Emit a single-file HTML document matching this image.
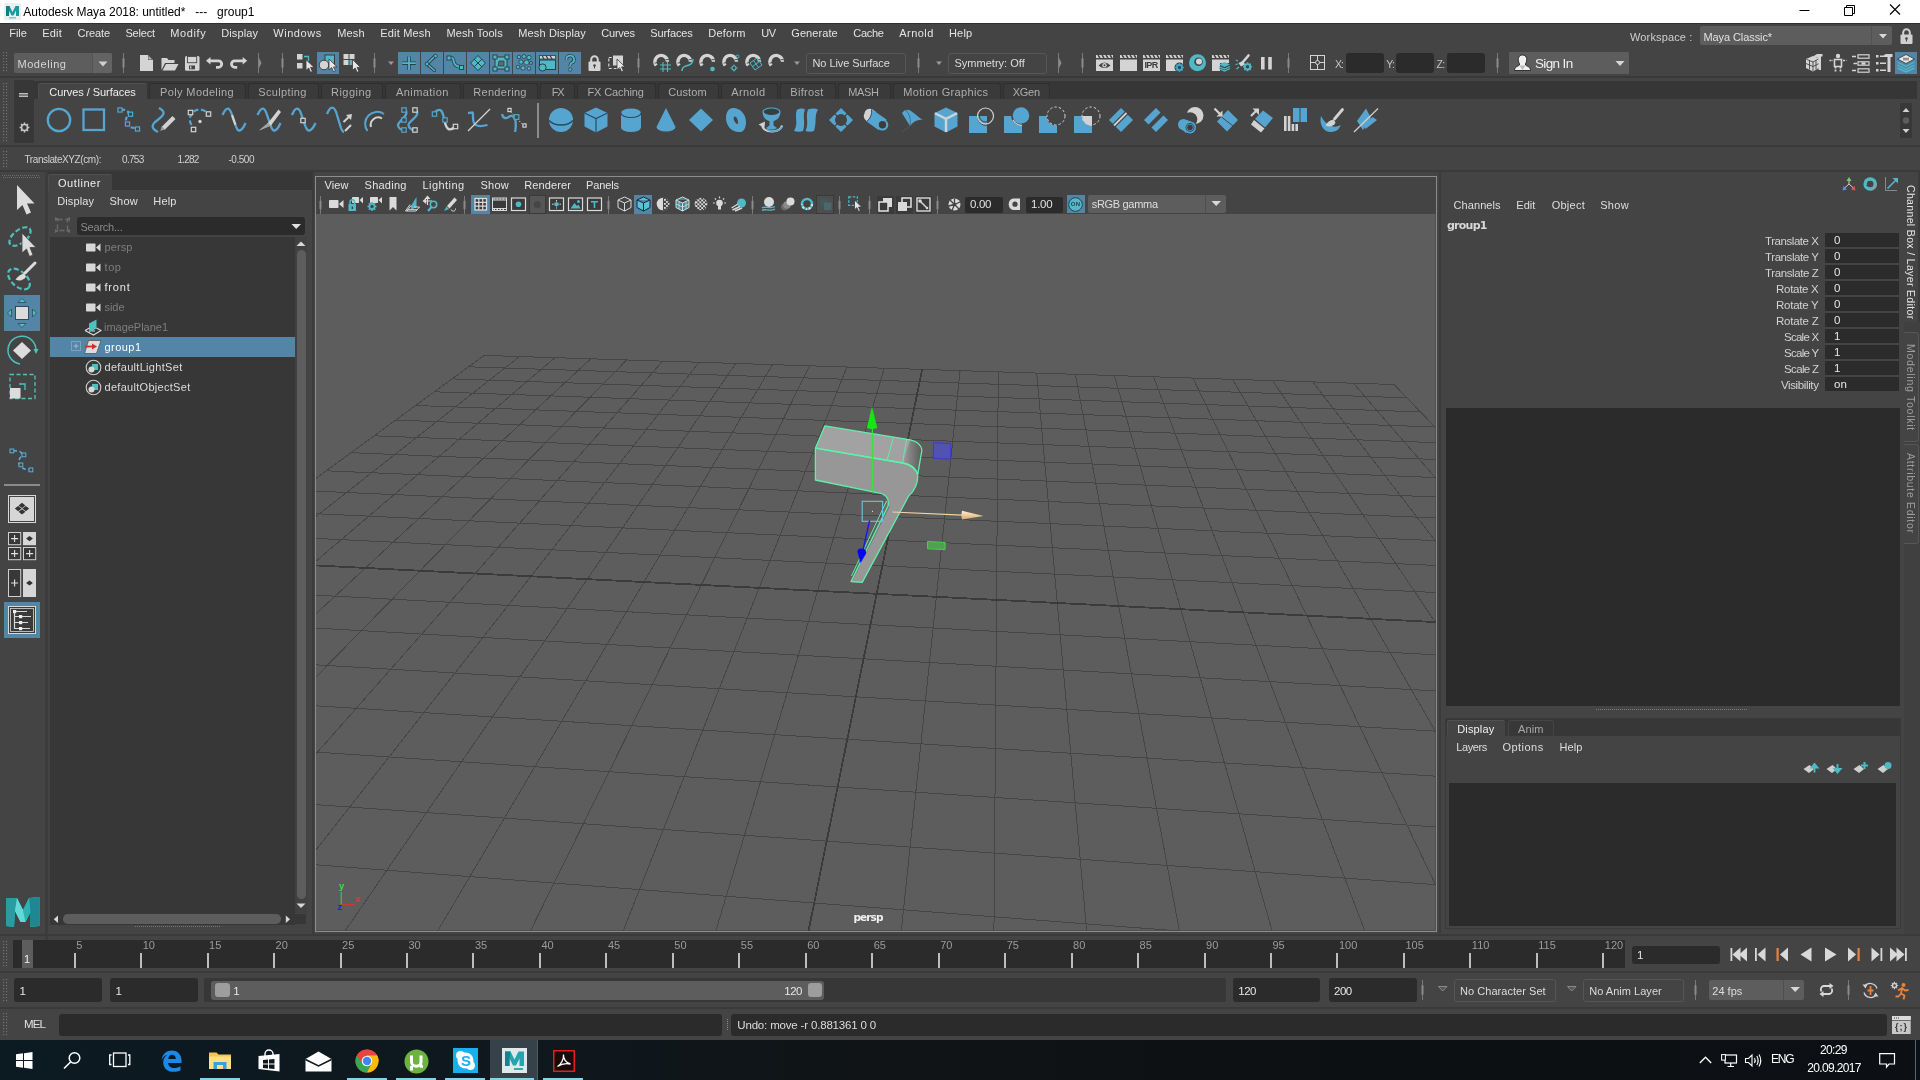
<!DOCTYPE html>
<html><head><meta charset="utf-8"><title>Autodesk Maya 2018</title>
<style>
html,body{margin:0;padding:0;background:#444;}
body{width:1920px;height:1080px;position:relative;overflow:hidden;font-family:"Liberation Sans",sans-serif;}
.t{position:absolute;white-space:pre;line-height:1;}
.r{position:absolute;box-sizing:border-box;}
svg{overflow:visible;}
#root{position:absolute;left:0;top:0;width:1920px;height:1080px;will-change:transform;}
</style></head><body><div id="root">
<div class="r" style="left:0px;top:0px;width:1920px;height:23px;background:#ffffff;"></div>
<div class="r" style="left:0px;top:23px;width:1920px;height:1017px;background:#444444;"></div>
<svg class="r" style="left:4px;top:3px;" width="17" height="17" viewBox="0 0 17 17"><rect x="0" y="0" width="17" height="17" fill="#e8f0f0"/><path d="M2 3 L5.5 3 L8.5 9 L11.5 3 L15 3 L15 13 L12 13 L12 7.5 L9.5 12.5 L7.5 12.5 L5 7.5 L5 13 L2 13 Z" fill="#1a9aa0"/><path d="M2 3 L5.5 3 L5 13 L2 13Z" fill="#0d7d86"/><rect x="5" y="14" width="7" height="1.5" fill="#7cc"/></svg>
<span class="t" style="left:23.30px;top:5.84px;font-size:12px;color:#000;letter-spacing:-0.025px;">Autodesk Maya 2018: untitled*   ---   group1</span>
<svg class="r" style="left:1790px;top:-1px;" width="130" height="23" viewBox="0 0 130 23"><path d="M9.5 11.5 H19.5" stroke="#000" stroke-width="1" fill="none"/><path d="M54.5 8.5 H62.5 V16.5 H54.5Z M56.5 8.5 V6.5 H64.5 V14.5 H62.5" stroke="#000" stroke-width="1" fill="none"/><path d="M100 5.5 L110 15.5 M110 5.5 L100 15.5" stroke="#000" stroke-width="1.1" fill="none"/></svg>
<div class="r" style="left:0px;top:23px;width:1920px;height:1px;background:#303030;"></div>
<span class="t" style="left:9.30px;top:27.69px;font-size:11px;color:#e4e4e4;letter-spacing:-0.081px;">File</span>
<span class="t" style="left:42.30px;top:27.69px;font-size:11px;color:#e4e4e4;letter-spacing:0.186px;">Edit</span>
<span class="t" style="left:77.60px;top:27.69px;font-size:11px;color:#e4e4e4;letter-spacing:-0.102px;">Create</span>
<span class="t" style="left:125.40px;top:27.69px;font-size:11px;color:#e4e4e4;letter-spacing:-0.162px;">Select</span>
<span class="t" style="left:170.30px;top:27.69px;font-size:11px;color:#e4e4e4;letter-spacing:0.601px;">Modify</span>
<span class="t" style="left:221.30px;top:27.69px;font-size:11px;color:#e4e4e4;letter-spacing:0.091px;">Display</span>
<span class="t" style="left:273.30px;top:27.69px;font-size:11px;color:#e4e4e4;letter-spacing:0.540px;">Windows</span>
<span class="t" style="left:337.30px;top:27.69px;font-size:11px;color:#e4e4e4;letter-spacing:0.126px;">Mesh</span>
<span class="t" style="left:380.30px;top:27.69px;font-size:11px;color:#e4e4e4;letter-spacing:0.166px;">Edit Mesh</span>
<span class="t" style="left:446.50px;top:27.69px;font-size:11px;color:#e4e4e4;letter-spacing:0.077px;">Mesh Tools</span>
<span class="t" style="left:518.30px;top:27.69px;font-size:11px;color:#e4e4e4;letter-spacing:0.140px;">Mesh Display</span>
<span class="t" style="left:601.30px;top:27.69px;font-size:11px;color:#e4e4e4;letter-spacing:-0.240px;">Curves</span>
<span class="t" style="left:650.30px;top:27.69px;font-size:11px;color:#e4e4e4;letter-spacing:-0.126px;">Surfaces</span>
<span class="t" style="left:708.30px;top:27.69px;font-size:11px;color:#e4e4e4;letter-spacing:0.223px;">Deform</span>
<span class="t" style="left:761.30px;top:27.69px;font-size:11px;color:#e4e4e4;letter-spacing:-0.541px;">UV</span>
<span class="t" style="left:791.30px;top:27.69px;font-size:11px;color:#e4e4e4;letter-spacing:0.068px;">Generate</span>
<span class="t" style="left:853.30px;top:27.69px;font-size:11px;color:#e4e4e4;letter-spacing:-0.279px;">Cache</span>
<span class="t" style="left:899.30px;top:27.69px;font-size:11px;color:#e4e4e4;letter-spacing:0.434px;">Arnold</span>
<span class="t" style="left:949.00px;top:27.69px;font-size:11px;color:#e4e4e4;letter-spacing:0.169px;">Help</span>
<span class="t" style="left:1630.00px;top:32.19px;font-size:11px;color:#cfcfcf;letter-spacing:0.143px;">Workspace :</span>
<div class="r" style="left:1700px;top:26px;width:192px;height:19px;background:#5d5d5d;border-radius:2px;"></div>
<div class="r" style="left:1871px;top:26px;width:1px;height:19px;background:#525252;"></div>
<span class="t" style="left:1703.50px;top:31.89px;font-size:11px;color:#e0e0e0;letter-spacing:-0.091px;">Maya Classic*</span>
<svg class="r" style="left:1877.5px;top:33.5px;" width="12" height="6" viewBox="0 0 12 6"><path d="M1 0 L9 0 L5 4.5Z" fill="#d8d8d8"/></svg>
<svg class="r" style="left:1900px;top:28px;" width="13" height="16" viewBox="0 0 13 16"><path d="M3.2 7 V4.5 A3.3 3.3 0 0 1 9.8 4.5 V7" stroke="#d0d0d0" stroke-width="2" fill="none"/><rect x="0.5" y="6.5" width="12" height="9.5" rx="1" fill="#d0d0d0"/><circle cx="6.5" cy="10.5" r="1.3" fill="#444"/><rect x="6" y="11" width="1" height="2.5" fill="#444"/></svg>
<svg class="r" style="left:3px;top:52px;" width="5" height="20" viewBox="0 0 5 20"><rect x="0" y="0" width="1.200" height="1.200" fill="#707070"/><rect x="3" y="0" width="1.200" height="1.200" fill="#707070"/><rect x="0" y="3" width="1.200" height="1.200" fill="#707070"/><rect x="3" y="3" width="1.200" height="1.200" fill="#707070"/><rect x="0" y="6" width="1.200" height="1.200" fill="#707070"/><rect x="3" y="6" width="1.200" height="1.200" fill="#707070"/><rect x="0" y="9" width="1.200" height="1.200" fill="#707070"/><rect x="3" y="9" width="1.200" height="1.200" fill="#707070"/><rect x="0" y="12" width="1.200" height="1.200" fill="#707070"/><rect x="3" y="12" width="1.200" height="1.200" fill="#707070"/><rect x="0" y="15" width="1.200" height="1.200" fill="#707070"/><rect x="3" y="15" width="1.200" height="1.200" fill="#707070"/><rect x="0" y="18" width="1.200" height="1.200" fill="#707070"/><rect x="3" y="18" width="1.200" height="1.200" fill="#707070"/></svg>
<div class="r" style="left:14px;top:52.5px;width:98px;height:20.5px;background:#5d5d5d;border-radius:2px;"></div>
<div class="r" style="left:92.5px;top:52.5px;width:19.5px;height:20.5px;background:#636363;border-radius:0 2px 2px 0;"></div>
<div class="r" style="left:92px;top:52.5px;width:1px;height:20.5px;background:#555;"></div>
<span class="t" style="left:17.50px;top:58.69px;font-size:11px;color:#d6d6d6;letter-spacing:0.546px;">Modeling</span>
<svg class="r" style="left:97.5px;top:60.5px;" width="11" height="7" viewBox="0 0 11 7"><path d="M0.5 0.5 L9.5 0.5 L5 5.5Z" fill="#d0d0d0"/></svg>
<svg class="r" style="left:122px;top:53px;" width="3" height="20" viewBox="0 0 3 20"><rect x="1" y="0" width="1" height="20" fill="#7a7a7a"/><rect x="0.5" y="5" width="2" height="10" rx="1" fill="#8a8a8a"/></svg>
<svg class="r" style="left:257px;top:53px;" width="5" height="20" viewBox="0 0 5 20"><rect x="1" y="0" width="1" height="20" fill="#7a7a7a"/><path d="M1.5 4 L4.5 10 L1.5 16 Z" fill="#8a8a8a"/></svg>
<svg class="r" style="left:280.8px;top:53px;" width="3" height="20" viewBox="0 0 3 20"><rect x="1" y="0" width="1" height="20" fill="#7a7a7a"/><rect x="0.5" y="5" width="2" height="10" rx="1" fill="#8a8a8a"/></svg>
<svg class="r" style="left:373px;top:53px;" width="3" height="20" viewBox="0 0 3 20"><rect x="1" y="0" width="1" height="20" fill="#7a7a7a"/><rect x="0.5" y="5" width="2" height="10" rx="1" fill="#8a8a8a"/></svg>
<svg class="r" style="left:637px;top:53px;" width="3" height="20" viewBox="0 0 3 20"><rect x="1" y="0" width="1" height="20" fill="#7a7a7a"/><rect x="0.5" y="5" width="2" height="10" rx="1" fill="#8a8a8a"/></svg>
<svg class="r" style="left:917px;top:53px;" width="3" height="20" viewBox="0 0 3 20"><rect x="1" y="0" width="1" height="20" fill="#7a7a7a"/><rect x="0.5" y="5" width="2" height="10" rx="1" fill="#8a8a8a"/></svg>
<svg class="r" style="left:1057px;top:53px;" width="5" height="20" viewBox="0 0 5 20"><rect x="1" y="0" width="1" height="20" fill="#7a7a7a"/><path d="M1.5 4 L4.5 10 L1.5 16 Z" fill="#8a8a8a"/></svg>
<svg class="r" style="left:1081px;top:53px;" width="3" height="20" viewBox="0 0 3 20"><rect x="1" y="0" width="1" height="20" fill="#7a7a7a"/><rect x="0.5" y="5" width="2" height="10" rx="1" fill="#8a8a8a"/></svg>
<svg class="r" style="left:1287px;top:53px;" width="3" height="20" viewBox="0 0 3 20"><rect x="1" y="0" width="1" height="20" fill="#7a7a7a"/><rect x="0.5" y="5" width="2" height="10" rx="1" fill="#8a8a8a"/></svg>
<svg class="r" style="left:1496px;top:53px;" width="3" height="20" viewBox="0 0 3 20"><rect x="1" y="0" width="1" height="20" fill="#7a7a7a"/><rect x="0.5" y="5" width="2" height="10" rx="1" fill="#8a8a8a"/></svg>
<div class="r" style="left:0px;top:76px;width:1920px;height:2.2px;background:#393939;"></div>
<svg class="r" style="left:3px;top:83px;" width="5" height="58" viewBox="0 0 5 58"><rect x="0" y="0" width="1.200" height="1.200" fill="#707070"/><rect x="3" y="0" width="1.200" height="1.200" fill="#707070"/><rect x="0" y="3" width="1.200" height="1.200" fill="#707070"/><rect x="3" y="3" width="1.200" height="1.200" fill="#707070"/><rect x="0" y="6" width="1.200" height="1.200" fill="#707070"/><rect x="3" y="6" width="1.200" height="1.200" fill="#707070"/><rect x="0" y="9" width="1.200" height="1.200" fill="#707070"/><rect x="3" y="9" width="1.200" height="1.200" fill="#707070"/><rect x="0" y="12" width="1.200" height="1.200" fill="#707070"/><rect x="3" y="12" width="1.200" height="1.200" fill="#707070"/><rect x="0" y="15" width="1.200" height="1.200" fill="#707070"/><rect x="3" y="15" width="1.200" height="1.200" fill="#707070"/><rect x="0" y="18" width="1.200" height="1.200" fill="#707070"/><rect x="3" y="18" width="1.200" height="1.200" fill="#707070"/><rect x="0" y="21" width="1.200" height="1.200" fill="#707070"/><rect x="3" y="21" width="1.200" height="1.200" fill="#707070"/><rect x="0" y="24" width="1.200" height="1.200" fill="#707070"/><rect x="3" y="24" width="1.200" height="1.200" fill="#707070"/><rect x="0" y="27" width="1.200" height="1.200" fill="#707070"/><rect x="3" y="27" width="1.200" height="1.200" fill="#707070"/><rect x="0" y="30" width="1.200" height="1.200" fill="#707070"/><rect x="3" y="30" width="1.200" height="1.200" fill="#707070"/><rect x="0" y="33" width="1.200" height="1.200" fill="#707070"/><rect x="3" y="33" width="1.200" height="1.200" fill="#707070"/><rect x="0" y="36" width="1.200" height="1.200" fill="#707070"/><rect x="3" y="36" width="1.200" height="1.200" fill="#707070"/><rect x="0" y="39" width="1.200" height="1.200" fill="#707070"/><rect x="3" y="39" width="1.200" height="1.200" fill="#707070"/><rect x="0" y="42" width="1.200" height="1.200" fill="#707070"/><rect x="3" y="42" width="1.200" height="1.200" fill="#707070"/><rect x="0" y="45" width="1.200" height="1.200" fill="#707070"/><rect x="3" y="45" width="1.200" height="1.200" fill="#707070"/><rect x="0" y="48" width="1.200" height="1.200" fill="#707070"/><rect x="3" y="48" width="1.200" height="1.200" fill="#707070"/><rect x="0" y="51" width="1.200" height="1.200" fill="#707070"/><rect x="3" y="51" width="1.200" height="1.200" fill="#707070"/><rect x="0" y="54" width="1.200" height="1.200" fill="#707070"/><rect x="3" y="54" width="1.200" height="1.200" fill="#707070"/><rect x="0" y="57" width="1.200" height="1.200" fill="#707070"/><rect x="3" y="57" width="1.200" height="1.200" fill="#707070"/></svg>
<div class="r" style="left:14px;top:80px;width:20px;height:63px;background:#373737;"></div>
<svg class="r" style="left:19px;top:93px;" width="10" height="5" viewBox="0 0 10 5"><rect x="0" y="0" width="9" height="1.5" fill="#bdbdbd"/><rect x="0" y="2.5" width="9" height="1.5" fill="#bdbdbd"/></svg>
<svg class="r" style="left:19px;top:122px;" width="11" height="11" viewBox="0 0 11 11"><circle cx="5.5" cy="5.5" r="3" stroke="#c8c8c8" stroke-width="1.6" fill="none"/><g stroke="#c8c8c8" stroke-width="1.6"><path d="M5.5 0.6V2 M5.5 9V10.4 M0.6 5.5H2 M9 5.5H10.4 M2 2L3 3 M8 8L9 9 M2 9L3 8 M8 3L9 2"/></g></svg>
<div class="r" style="left:34px;top:80.5px;width:1883px;height:18px;background:#363636;"></div>
<div class="r" style="left:38px;top:82.5px;width:109px;height:16.5px;background:#444444;border-radius:2px 2px 0 0;border-top:1px solid #505050;border-left:1px solid #4c4c4c;"></div>
<span class="t" style="left:49.30px;top:87.19px;font-size:11px;color:#eeeeee;letter-spacing:-0.060px;">Curves / Surfaces</span>
<div class="r" style="left:149px;top:82.5px;width:97px;height:16.5px;background:#3a3a3a;border-radius:3px 3px 0 0;border:1px solid #2f2f2f;border-bottom:none;"></div>
<span class="t" style="left:160.00px;top:87.19px;font-size:11px;color:#aeaeae;letter-spacing:0.378px;">Poly Modeling</span>
<div class="r" style="left:248px;top:82.5px;width:71px;height:16.5px;background:#3a3a3a;border-radius:3px 3px 0 0;border:1px solid #2f2f2f;border-bottom:none;"></div>
<span class="t" style="left:258.30px;top:87.19px;font-size:11px;color:#aeaeae;letter-spacing:0.350px;">Sculpting</span>
<div class="r" style="left:321px;top:82.5px;width:62px;height:16.5px;background:#3a3a3a;border-radius:3px 3px 0 0;border:1px solid #2f2f2f;border-bottom:none;"></div>
<span class="t" style="left:331.00px;top:87.19px;font-size:11px;color:#aeaeae;letter-spacing:0.486px;">Rigging</span>
<div class="r" style="left:385px;top:82.5px;width:76px;height:16.5px;background:#3a3a3a;border-radius:3px 3px 0 0;border:1px solid #2f2f2f;border-bottom:none;"></div>
<span class="t" style="left:396.00px;top:87.19px;font-size:11px;color:#aeaeae;letter-spacing:0.421px;">Animation</span>
<div class="r" style="left:463px;top:82.5px;width:75px;height:16.5px;background:#3a3a3a;border-radius:3px 3px 0 0;border:1px solid #2f2f2f;border-bottom:none;"></div>
<span class="t" style="left:473.30px;top:87.19px;font-size:11px;color:#aeaeae;letter-spacing:0.294px;">Rendering</span>
<div class="r" style="left:540px;top:82.5px;width:35px;height:16.5px;background:#3a3a3a;border-radius:3px 3px 0 0;border:1px solid #2f2f2f;border-bottom:none;"></div>
<span class="t" style="left:551.70px;top:87.19px;font-size:11px;color:#aeaeae;letter-spacing:-1.200px;">FX</span>
<div class="r" style="left:577px;top:82.5px;width:78.5px;height:16.5px;background:#3a3a3a;border-radius:3px 3px 0 0;border:1px solid #2f2f2f;border-bottom:none;"></div>
<span class="t" style="left:587.50px;top:87.19px;font-size:11px;color:#aeaeae;letter-spacing:-0.127px;">FX Caching</span>
<div class="r" style="left:657.5px;top:82.5px;width:61.5px;height:16.5px;background:#3a3a3a;border-radius:3px 3px 0 0;border:1px solid #2f2f2f;border-bottom:none;"></div>
<span class="t" style="left:668.30px;top:87.19px;font-size:11px;color:#aeaeae;letter-spacing:0.084px;">Custom</span>
<div class="r" style="left:721px;top:82.5px;width:57px;height:16.5px;background:#3a3a3a;border-radius:3px 3px 0 0;border:1px solid #2f2f2f;border-bottom:none;"></div>
<span class="t" style="left:731.20px;top:87.19px;font-size:11px;color:#aeaeae;letter-spacing:0.417px;">Arnold</span>
<div class="r" style="left:780px;top:82.5px;width:55.5px;height:16.5px;background:#3a3a3a;border-radius:3px 3px 0 0;border:1px solid #2f2f2f;border-bottom:none;"></div>
<span class="t" style="left:790.30px;top:87.19px;font-size:11px;color:#aeaeae;letter-spacing:0.318px;">Bifrost</span>
<div class="r" style="left:837.5px;top:82.5px;width:53.5px;height:16.5px;background:#3a3a3a;border-radius:3px 3px 0 0;border:1px solid #2f2f2f;border-bottom:none;"></div>
<span class="t" style="left:848.30px;top:87.19px;font-size:11px;color:#aeaeae;letter-spacing:-0.345px;">MASH</span>
<div class="r" style="left:893px;top:82.5px;width:107.5px;height:16.5px;background:#3a3a3a;border-radius:3px 3px 0 0;border:1px solid #2f2f2f;border-bottom:none;"></div>
<span class="t" style="left:903.30px;top:87.19px;font-size:11px;color:#aeaeae;letter-spacing:0.328px;">Motion Graphics</span>
<div class="r" style="left:1002.5px;top:82.5px;width:47.5px;height:16.5px;background:#3a3a3a;border-radius:3px 3px 0 0;border:1px solid #2f2f2f;border-bottom:none;"></div>
<span class="t" style="left:1012.80px;top:87.19px;font-size:11px;color:#aeaeae;letter-spacing:-0.307px;">XGen</span>
<div class="r" style="left:0px;top:145px;width:1920px;height:1.5px;background:#3a3a3a;"></div>
<div class="r" style="left:1900px;top:103px;width:12px;height:35px;background:#383838;"></div>
<svg class="r" style="left:1900px;top:103px;" width="12" height="35" viewBox="0 0 12 35"><path d="M2.5 9 L6 5 L9.5 9Z" fill="#cfcfcf"/><circle cx="6" cy="17.5" r="3.2" fill="#5d5d5d"/><path d="M2.5 26 L6 30 L9.5 26Z" fill="#cfcfcf"/></svg>
<svg class="r" style="left:46px;top:107px;" width="26" height="26" viewBox="0 0 26 26"><circle cx="13" cy="13" r="11.2" fill="none" stroke="#56a5d0" stroke-width="2.300"/></svg>
<svg class="r" style="left:81px;top:107px;" width="26" height="26" viewBox="0 0 26 26"><rect x="2.5" y="2.5" width="20.5" height="20.5" fill="none" stroke="#56a5d0" stroke-width="2.300"/></svg>
<svg class="r" style="left:116px;top:107px;" width="26" height="26" viewBox="0 0 26 26"><path d="M5 3 Q13 2 12.5 7 Q9 12 10 16 Q13 21 19 21" fill="none" stroke="#56a5d0" stroke-width="2.200" stroke-dasharray="4 2.5"/><rect x="1.926" y="0.926" width="4.148" height="4.148" fill="#444444" stroke="#56a5d0" stroke-width="1.2"/><rect x="12.426" y="5.126" width="4.148" height="4.148" fill="#444444" stroke="#56a5d0" stroke-width="1.2"/><rect x="9.426" y="14.926" width="4.148" height="4.148" fill="#444444" stroke="#56a5d0" stroke-width="1.2"/><rect x="19.426" y="19.926" width="4.148" height="4.148" fill="#444444" stroke="#56a5d0" stroke-width="1.2"/></svg>
<svg class="r" style="left:151px;top:107px;" width="26" height="26" viewBox="0 0 26 26"><path d="M8 1 C18 6 9 11 4 15 C-1 20 3 23 7 25" fill="none" stroke="#56a5d0" stroke-width="2.300"/><path d="M9.5 23.5 L11 19.5 L21.5 9 L24.5 12 L14 22.5 Z" fill="#d2d2d2"/><path d="M9.5 23.5 L11 19.5 L14 22.5Z" fill="#9a9a9a"/></svg>
<svg class="r" style="left:186px;top:107px;" width="26" height="26" viewBox="0 0 26 26"><path d="M5.5 18 A10 10 0 0 1 21 5.5" fill="none" stroke="#56a5d0" stroke-width="2.200" stroke-dasharray="5 2.5"/><rect x="2.304" y="3.304" width="4.392" height="4.392" fill="#444444" stroke="#d2d2d2" stroke-width="1.2"/><rect x="20.304" y="4.804" width="4.392" height="4.392" fill="#444444" stroke="#d2d2d2" stroke-width="1.2"/><rect x="5.304" y="20.304" width="4.392" height="4.392" fill="#444444" stroke="#d2d2d2" stroke-width="1.2"/><circle cx="14" cy="14.5" r="1.7" fill="#d2d2d2"/></svg>
<svg class="r" style="left:221px;top:107px;" width="26" height="26" viewBox="0 0 26 26"><path d="M1.5 8 C6 -2 9 1 11 8" fill="none" stroke="#56a5d0" stroke-width="2.300"/><path d="M11 8 L14.5 18" fill="none" stroke="#d2d2d2" stroke-width="2.300"/><path d="M14.5 18 C17 27 21 24 24.5 16" fill="none" stroke="#56a5d0" stroke-width="2.300"/></svg>
<svg class="r" style="left:256px;top:107px;" width="26" height="26" viewBox="0 0 26 26"><path d="M1.5 8 C6 -2 9 1 11 8 L14.5 18 C17 27 21 24 24.5 16" fill="none" stroke="#56a5d0" stroke-width="2.300"/><path d="M3 23.5 L12 16 L22.5 2.5 L25 5 L15 18.5 Z" fill="#d2d2d2"/><path d="M3 23.5 L12 16 L15 18.5Z" fill="#a0a0a0"/></svg>
<svg class="r" style="left:291px;top:107px;" width="26" height="26" viewBox="0 0 26 26"><path d="M1 8 C5 -2 8.5 1 10.5 8 L14 18 C16.5 27 21 24 24.5 16" fill="none" stroke="#56a5d0" stroke-width="2.300"/><rect x="9.804" y="11.304" width="4.392" height="4.392" fill="#444444" stroke="#d2d2d2" stroke-width="1.2"/></svg>
<svg class="r" style="left:326px;top:107px;" width="26" height="26" viewBox="0 0 26 26"><path d="M1 7 C5 -3 9 0 11 8 L15 21 C16 24 17 25 18 25" fill="none" stroke="#56a5d0" stroke-width="2.300"/><path d="M19 24 L25 18" stroke="#d2d2d2" stroke-width="2.2"/><path d="M17.5 15 L24.5 8.5" stroke="#d2d2d2" stroke-width="2"/><path d="M20 8 L26 7 L25 13Z" fill="#d2d2d2"/></svg>
<svg class="r" style="left:361px;top:107px;" width="26" height="26" viewBox="0 0 26 26"><path d="M6.5 24 A12 12 0 0 1 23 7" fill="none" stroke="#56a5d0" stroke-width="2"/><path d="M10 20 A7.5 7.5 0 0 1 21 11.5" fill="none" stroke="#d2d2d2" stroke-width="2"/></svg>
<svg class="r" style="left:396px;top:107px;" width="26" height="26" viewBox="0 0 26 26"><path d="M8 2 C16 7 2 14 2 18 C2 21 5 23 8 23.5 M19 2.5 C27 8 12 14 12.5 18 C13 21 16 23 19 23.5" fill="none" stroke="#56a5d0" stroke-width="2.300"/><rect x="5.804" y="0.804" width="4.392" height="4.392" fill="#444444" stroke="#56a5d0" stroke-width="1.2"/><rect x="5.804" y="10.804" width="4.392" height="4.392" fill="#444444" stroke="#56a5d0" stroke-width="1.2"/><rect x="5.804" y="20.804" width="4.392" height="4.392" fill="#444444" stroke="#56a5d0" stroke-width="1.2"/><rect x="16.804" y="0.804" width="4.392" height="4.392" fill="#444444" stroke="#d2d2d2" stroke-width="1.2"/><rect x="16.804" y="20.804" width="4.392" height="4.392" fill="#444444" stroke="#d2d2d2" stroke-width="1.2"/></svg>
<svg class="r" style="left:431px;top:107px;" width="26" height="26" viewBox="0 0 26 26"><path d="M4 5 C9 1 11 3 12.5 9 L13.5 13" fill="none" stroke="#56a5d0" stroke-width="2.300"/><path d="M13.5 13 C15 22 18 25 24 20" fill="none" stroke="#d2d2d2" stroke-width="2.300"/><rect x="1.304" y="4.804" width="4.392" height="4.392" fill="#444444" stroke="#56a5d0" stroke-width="1.2"/><rect x="11.804" y="10.804" width="4.392" height="4.392" fill="#444444" stroke="#56a5d0" stroke-width="1.2"/><rect x="22.304" y="17.304" width="4.392" height="4.392" fill="#444444" stroke="#d2d2d2" stroke-width="1.2"/></svg>
<svg class="r" style="left:466px;top:107px;" width="26" height="26" viewBox="0 0 26 26"><path d="M2 6 C7 6 7 3 7 10 C7 18 10 21 21.5 18" fill="none" stroke="#56a5d0" stroke-width="2.300"/><path d="M2 24 L24 2" stroke="#d2d2d2" stroke-width="1.2"/></svg>
<svg class="r" style="left:501px;top:107px;" width="26" height="26" viewBox="0 0 26 26"><path d="M1 7 C2 12 6 12 9 9 C12 8 14 11 14.5 14 C15 18 15 21 14 25" fill="none" stroke="#56a5d0" stroke-width="2.300"/><path d="M8 3 L23 19" stroke="#d2d2d2" stroke-width="0.9" stroke-dasharray="1.5 1.5"/><rect x="6.914" y="1.414" width="3.172" height="3.172" fill="#444444" stroke="#d2d2d2" stroke-width="1.2"/><rect x="13.182" y="7.682" width="4.636" height="4.636" fill="#444444" stroke="#56a5d0" stroke-width="1.2"/><rect x="21.914" y="16.914" width="3.172" height="3.172" fill="#444444" stroke="#d2d2d2" stroke-width="1.2"/></svg>
<svg class="r" style="left:548px;top:107px;" width="26" height="26" viewBox="0 0 26 26"><circle cx="13" cy="13" r="12" fill="#56a5d0"/><path d="M1.2 13.5 C6 19.5 20 19.5 24.8 13.5" fill="none" stroke="#2a4a5e" stroke-width="1.300"/></svg>
<svg class="r" style="left:583px;top:107px;" width="26" height="26" viewBox="0 0 26 26"><path d="M13 0.5 L24.5 6 L24.5 19.5 L13 25.5 L1.5 19.5 L1.5 6Z" fill="#56a5d0"/><path d="M1.5 6 L13 11.5 L24.5 6 M13 11.5 V25.5" fill="none" stroke="#2b4b5f" stroke-width="1.200"/></svg>
<svg class="r" style="left:618px;top:107px;" width="26" height="26" viewBox="0 0 26 26"><path d="M3 6 V20.5 A10 4.5 0 0 0 23 20.5 V6 A10 4.5 0 0 0 3 6Z" fill="#56a5d0"/><path d="M3 6 A10 4.5 0 0 0 23 6" fill="none" stroke="#2b4b5f" stroke-width="1.200"/></svg>
<svg class="r" style="left:653px;top:107px;" width="26" height="26" viewBox="0 0 26 26"><path d="M13 1 L22.5 20 A9.5 4.5 0 0 1 3.5 20 Z" fill="#56a5d0"/></svg>
<svg class="r" style="left:688px;top:107px;" width="26" height="26" viewBox="0 0 26 26"><path d="M13 1.5 L25 13 L13 24.5 L1 13Z" fill="#56a5d0"/></svg>
<svg class="r" style="left:723px;top:107px;" width="26" height="26" viewBox="0 0 26 26"><path fill-rule="evenodd" d="M10 1 C18 1 23 8 23 15 C23 22 20 25.5 16 25 C8 25 3 18 3 11 C3 5 6 1 10 1Z M12 9.5 C10 9.5 10.5 13 12 15 C13.5 17.5 15.5 17.5 15 15 C14.7 12.5 13.5 9.5 12 9.5Z" fill="#56a5d0"/></svg>
<svg class="r" style="left:758px;top:107px;" width="26" height="26" viewBox="0 0 26 26"><path d="M4.500 4.500 A9 4 0 0 1 22.500 4.500 C22.500 10 19 13.500 15.500 14 V18.500 L19 21 C16 23 11 23 8 21 L11.500 18.500 V14 C8 13.500 4.500 10 4.500 4.500Z" fill="#56a5d0"/><ellipse cx="13.500" cy="4.800" rx="7.800" ry="3.200" fill="#3c3c3c"/><path d="M4.500 17 C3 21 8 25 15 24.500 C20 24 23.500 21.500 24 18.500" fill="none" stroke="#d2d2d2" stroke-width="2"/><path d="M0.500 17.500 L7 14.500 L6.500 21Z" fill="#d2d2d2"/><path d="M9 22.500 C15 26 22 24 24 20" fill="none" stroke="#56a5d0" stroke-width="1.500"/></svg>
<svg class="r" style="left:793px;top:107px;" width="26" height="26" viewBox="0 0 26 26"><path d="M4 2.5 C8 1 10 1 12 2.5 C9 9 13 15 10 24 C8 25 4 25 1 24 C6 16 1 10 4 2.5Z M15 2.5 C19 1 22 1 25 2.5 C21 9 24 15 21 24 C18 25 15 25 12.5 24 C16.5 16 12 10 15 2.5Z" fill="#56a5d0"/></svg>
<svg class="r" style="left:828px;top:107px;" width="26" height="26" viewBox="0 0 26 26"><path fill-rule="evenodd" d="M13 1 L25 13 L13 25 L1 13Z M13 7 A6 6 0 1 0 13 19 A6 6 0 1 0 13 7Z" fill="#56a5d0"/><path d="M6 6 L9 9 M20 6 L17 9 M6 20 L9 17 M20 20 L17 17" stroke="#444444" stroke-width="1.2"/></svg>
<svg class="r" style="left:863px;top:107px;" width="26" height="26" viewBox="0 0 26 26"><path d="M1.500 6.500 A5.200 5.200 0 0 1 9.500 2.500 L13 5 L5 15 L3 13.500 A5.200 5.200 0 0 1 1.500 6.500Z" fill="#d2d2d2"/><path d="M8.500 2 L23.500 12.500 L15.500 23 L3.500 14.500 Q9 10 8.500 2Z" fill="#56a5d0"/><circle cx="19.500" cy="17.800" r="5.800" fill="#56a5d0"/><circle cx="19.500" cy="17.800" r="3.700" fill="#3c3c3c"/><path d="M8.500 2.500 Q9.500 9.500 3.800 14.500" fill="none" stroke="#2b4b5f" stroke-width="0.900"/></svg>
<svg class="r" style="left:898px;top:107px;" width="26" height="26" viewBox="0 0 26 26"><path d="M4 6 C7 2 10 2 13 4 C18 7 21 11 25 13 C20 12 16 14 12 19 Z" fill="#56a5d0"/><path d="M8 3 C12 8 13 13 12 19" fill="none" stroke="#2f6583" stroke-width="0.8"/><path d="M12 19 L4 25" stroke="#555" stroke-width="1"/></svg>
<svg class="r" style="left:933px;top:107px;" width="26" height="26" viewBox="0 0 26 26"><path d="M13 0.5 L24.5 6 L24.5 19.5 L13 25.5 L1.5 19.5 L1.5 6Z" fill="#56a5d0"/><path d="M2 6.3 L13 11.8 L24 6.3 M13 11.8 V25" fill="none" stroke="#d2d2d2" stroke-width="2.4"/></svg>
<svg class="r" style="left:968px;top:107px;" width="26" height="26" viewBox="0 0 26 26"><path d="M1 9 H19 V26 H1Z" fill="#56a5d0"/><path d="M9.5 9 A9 9 0 0 0 19 18.5" fill="none" stroke="#444444" stroke-width="1"/><circle cx="17.5" cy="9" r="8" fill="none" stroke="#d2d2d2" stroke-width="1.2"/><circle cx="17.5" cy="9" r="6" fill="none" stroke="#444" stroke-width="1"/></svg>
<svg class="r" style="left:1003px;top:107px;" width="26" height="26" viewBox="0 0 26 26"><path d="M1 9 H19 V26 H1Z" fill="#56a5d0"/><circle cx="18" cy="8.5" r="10" fill="#444"/><circle cx="18" cy="8.5" r="8.3" fill="#56a5d0"/><path d="M10 13 A10 10 0 0 0 19 18.3" fill="none" stroke="#d2d2d2" stroke-width="1.2"/></svg>
<svg class="r" style="left:1038px;top:107px;" width="26" height="26" viewBox="0 0 26 26"><path d="M1 9 H19 V26 H1Z" fill="#56a5d0"/><circle cx="18" cy="9" r="9.5" fill="#444"/><circle cx="18" cy="9" r="9" fill="none" stroke="#d2d2d2" stroke-width="1" stroke-dasharray="2.5 2"/></svg>
<svg class="r" style="left:1073px;top:107px;" width="26" height="26" viewBox="0 0 26 26"><path d="M1 9 H19 V26 H1Z" fill="#56a5d0"/><path d="M9 9 H19 V19 A10 10 0 0 1 9 9Z" fill="#d2d2d2"/><circle cx="18" cy="9" r="9" fill="none" stroke="#d2d2d2" stroke-width="1" stroke-dasharray="2.5 2"/></svg>
<svg class="r" style="left:1108px;top:107px;" width="26" height="26" viewBox="0 0 26 26"><path d="M13 1 L25 13 L13 25 L1 13Z" fill="#56a5d0"/><path d="M5.5 19 L19 5.5" stroke="#444" stroke-width="4.5"/><path d="M6 18.5 L18.5 6" stroke="#d2d2d2" stroke-width="1.8"/></svg>
<svg class="r" style="left:1143px;top:107px;" width="26" height="26" viewBox="0 0 26 26"><path d="M13 1 L25 13 L13 25 L1 13Z" fill="#56a5d0"/><path d="M5.5 20.5 L20.5 5.5" stroke="#444" stroke-width="4"/></svg>
<svg class="r" style="left:1178px;top:107px;" width="26" height="26" viewBox="0 0 26 26"><circle cx="17" cy="8.500" r="8.500" fill="#d2d2d2"/><circle cx="12" cy="12.500" r="7.300" fill="#444"/><circle cx="5.500" cy="17.500" r="5.500" fill="#56a5d0"/><path d="M2 13.500 L9 13 L16 16 L8 26 L2 21Z" fill="#56a5d0"/><circle cx="12" cy="20.500" r="6" fill="#56a5d0"/><circle cx="12" cy="20.500" r="4.400" fill="#3c3c3c"/><circle cx="12" cy="20.500" r="3.300" fill="none" stroke="#56a5d0" stroke-width="0.800"/></svg>
<svg class="r" style="left:1213px;top:107px;" width="26" height="26" viewBox="0 0 26 26"><path d="M15 3 L25 13 L14 24.5 L4 14.5Z" fill="#56a5d0"/><path d="M8.5 10 L20 19" stroke="#444" stroke-width="1"/><path d="M1.5 1.5 L8 8" stroke="#d2d2d2" stroke-width="2.2"/><path d="M9.5 3.5 V9.5 H3.5Z" fill="#d2d2d2"/></svg>
<svg class="r" style="left:1248px;top:107px;" width="26" height="26" viewBox="0 0 26 26"><path d="M15 3.5 L25 11 L17 20.5 L7 12Z" fill="#56a5d0"/><path d="M6 13 L16.5 21.5 L13 25.5 L3 17.5Z" fill="#d2d2d2"/><path d="M3 9 L9 3" stroke="#d2d2d2" stroke-width="2.2"/><path d="M4.5 1.5 H11 V8Z" fill="#d2d2d2"/></svg>
<svg class="r" style="left:1283px;top:107px;" width="26" height="26" viewBox="0 0 26 26"><rect x="10" y="1" width="6.5" height="14" fill="#56a5d0"/><rect x="17.5" y="1" width="6.5" height="14" fill="#56a5d0"/><rect x="1" y="9" width="2.6" height="15" fill="#d2d2d2"/><rect x="4.8" y="9" width="2.6" height="15" fill="#d2d2d2"/><rect x="8.6" y="17" width="2.6" height="7" fill="#d2d2d2"/><rect x="12.4" y="17" width="2.6" height="7" fill="#d2d2d2"/></svg>
<svg class="r" style="left:1318px;top:107px;" width="26" height="26" viewBox="0 0 26 26"><path d="M3 9 C1 17 5 25 13 25 C19 25 22 21 22.5 18 C17 21.5 9 20 3 9Z" fill="#56a5d0"/><path d="M7.5 18.5 C9 15 12 13 15.5 12.5 L17.5 15.5 C16 19 12 20.5 7.5 18.5Z" fill="#d2d2d2"/><path d="M16.5 12 L24.5 2.5" stroke="#d2d2d2" stroke-width="2.8" stroke-linecap="round"/></svg>
<svg class="r" style="left:1353px;top:107px;" width="26" height="26" viewBox="0 0 26 26"><path d="M4 14 L13 1.5 L18 11 L10 23Z" fill="#56a5d0"/><path d="M12.500 22 L24 13 L19.500 10 L11 18Z" fill="#56a5d0"/><path d="M1 25 L25 1.5" stroke="#d2d2d2" stroke-width="1.2"/></svg>
<div class="r" style="left:537px;top:103px;width:2.2px;height:35px;background:#8c8c8c;"></div>
<svg class="r" style="left:3px;top:151px;" width="5" height="16" viewBox="0 0 5 16"><rect x="0" y="0" width="1.200" height="1.200" fill="#707070"/><rect x="3" y="0" width="1.200" height="1.200" fill="#707070"/><rect x="0" y="3" width="1.200" height="1.200" fill="#707070"/><rect x="3" y="3" width="1.200" height="1.200" fill="#707070"/><rect x="0" y="6" width="1.200" height="1.200" fill="#707070"/><rect x="3" y="6" width="1.200" height="1.200" fill="#707070"/><rect x="0" y="9" width="1.200" height="1.200" fill="#707070"/><rect x="3" y="9" width="1.200" height="1.200" fill="#707070"/><rect x="0" y="12" width="1.200" height="1.200" fill="#707070"/><rect x="3" y="12" width="1.200" height="1.200" fill="#707070"/><rect x="0" y="15" width="1.200" height="1.200" fill="#707070"/><rect x="3" y="15" width="1.200" height="1.200" fill="#707070"/></svg>
<span class="t" style="left:24.50px;top:154.53px;font-size:10px;color:#d0d0d0;letter-spacing:-0.413px;">TranslateXYZ(cm):</span>
<span class="t" style="left:122.00px;top:154.53px;font-size:10px;color:#d0d0d0;letter-spacing:-0.684px;">0.753</span>
<span class="t" style="left:177.50px;top:154.53px;font-size:10px;color:#d0d0d0;letter-spacing:-0.804px;">1.282</span>
<span class="t" style="left:228.50px;top:154.53px;font-size:10px;color:#d0d0d0;letter-spacing:-0.475px;">-0.500</span>
<div class="r" style="left:0px;top:170px;width:1920px;height:1.5px;background:#3a3a3a;"></div>
<svg class="r" style="left:139.5px;top:55px;" width="14" height="16" viewBox="0 0 14 16"><path d="M0 0 H8 L13 5 V16 H0Z" fill="#d4d4d4"/><path d="M8 0 V5 H13" fill="#9a9a9a"/><path d="M8 0 L13 5 H8Z" fill="#444"/><path d="M8.4 1 L12 4.6 H8.4Z" fill="#bbb"/></svg>
<svg class="r" style="left:160.5px;top:57px;" width="18" height="14" viewBox="0 0 18 14"><path d="M0.5 13 V1 H6 L7.5 3 H13.500 V6 H4 L0.5 13Z" fill="#d4d4d4"/><path d="M1.5 13.500 L5 7 H17.5 L14 13.500Z" fill="#d4d4d4"/></svg>
<svg class="r" style="left:185px;top:55.5px;" width="15" height="15" viewBox="0 0 15 15"><rect x="0" y="0" width="14.500" height="14.800" rx="1.500" fill="#d4d4d4"/><rect x="2.400" y="0.500" width="9.300" height="6.200" fill="#d4d4d4" stroke="#444" stroke-width="0.900"/><rect x="4" y="9.500" width="6" height="3.800" fill="#444"/><rect x="5" y="10.300" width="1.400" height="2.200" fill="#d4d4d4"/></svg>
<svg class="r" style="left:206px;top:57.2px;" width="18" height="12" viewBox="0 0 18 12"><path d="M4 3.800 H12.450 A3.250 3.250 0 0 1 12.450 10.300 H10" fill="none" stroke="#d4d4d4" stroke-width="2.800"/><path d="M0 3.800 L4.500 0 V7.600Z" fill="#d4d4d4"/></svg>
<svg class="r" style="left:230px;top:57.2px;" width="18" height="12" viewBox="0 0 18 12"><path d="M13.200 3.800 H4.750 A3.250 3.250 0 0 0 4.750 10.300 H7.200" fill="none" stroke="#d4d4d4" stroke-width="2.800"/><path d="M17.200 3.800 L12.700 0 V7.600Z" fill="#d4d4d4"/></svg>
<svg class="r" style="left:296px;top:53px;" width="19" height="20" viewBox="0 0 19 20"><rect x="1" y="1" width="5.500" height="5.500" fill="#d4d4d4"/><rect x="1" y="10" width="5.500" height="5.500" fill="#d4d4d4"/><path d="M8 3.500 H12.500 V8" fill="none" stroke="#4fb9c6" stroke-width="1.3"/><path d="M10.00 6.50 L10.00 17.42 L12.66 15.05 L14.56 19.32 L16.46 18.47 L14.56 14.39 L18.07 14.39Z" fill="#e6e6e6" stroke="#3a3a3a" stroke-width="0.8"/></svg>
<div class="r" style="left:317px;top:52px;width:21.7px;height:21.7px;background:#5285a6;"></div>
<svg class="r" style="left:317px;top:52px;" width="22" height="22" viewBox="0 0 22 22"><rect x="8" y="3" width="9.5" height="9.500" fill="#4fb9c6" stroke="#333" stroke-width="0.9"/><circle cx="7" cy="13" r="4.800" fill="#d4d4d4" stroke="#333" stroke-width="0.9"/><path d="M12.00 7.00 L12.00 17.92 L14.66 15.55 L16.56 19.82 L18.46 18.97 L16.56 14.89 L20.07 14.89Z" fill="#e6e6e6" stroke="#3a3a3a" stroke-width="0.8"/></svg>
<svg class="r" style="left:343px;top:53px;" width="19" height="20" viewBox="0 0 19 20"><rect x="0.5" y="1" width="5" height="5" fill="#d4d4d4"/><rect x="6.500" y="1" width="5" height="5" fill="#d4d4d4"/><rect x="0.5" y="7" width="5" height="5" fill="#d4d4d4"/><rect x="6.500" y="7" width="5" height="5" fill="#4fb9c6"/><path d="M9.50 6.50 L9.50 17.42 L12.16 15.05 L14.06 19.32 L15.96 18.47 L14.06 14.39 L17.57 14.39Z" fill="#e6e6e6" stroke="#3a3a3a" stroke-width="0.8"/></svg>
<svg class="r" style="left:387.5px;top:60.5px;" width="7" height="5" viewBox="0 0 7 5"><path d="M0 0.5 H6 L3 4Z" fill="#9a9a9a"/></svg>
<div class="r" style="left:398px;top:52px;width:21.8px;height:21.7px;background:#5285a6;"></div>
<svg class="r" style="left:398px;top:52px;" width="22" height="22" viewBox="0 0 22 22"><path d="M11 4.500 V18 M4.200 11.200 H17.800" stroke="#2d3d46" stroke-width="3.400"/><path d="M11 4.500 V18 M4.200 11.200 H17.800" stroke="#4fb9c6" stroke-width="1.800"/></svg>
<div class="r" style="left:421.2px;top:52px;width:21.8px;height:21.7px;background:#5285a6;"></div>
<svg class="r" style="left:421.2px;top:52px;" width="22" height="22" viewBox="0 0 22 22"><path d="M14 4 L6 12 L13.500 18.500" fill="none" stroke="#2d3d46" stroke-width="3.200" stroke-linecap="round" stroke-linejoin="round"/><path d="M14 4 L6 12 L13.500 18.500" fill="none" stroke="#4fb9c6" stroke-width="1.600" stroke-linecap="round"/><circle cx="14.500" cy="4" r="1.800" fill="#4fb9c6" stroke="#2d3d46" stroke-width="0.800"/><circle cx="6" cy="12" r="1.800" fill="#4fb9c6" stroke="#2d3d46" stroke-width="0.800"/></svg>
<div class="r" style="left:444.2px;top:52px;width:21.8px;height:21.7px;background:#5285a6;"></div>
<svg class="r" style="left:444.2px;top:52px;" width="22" height="22" viewBox="0 0 22 22"><path d="M5 6 C12 4 8 13 13 14 C16 14.500 16 15 17 15.500" fill="none" stroke="#2d3d46" stroke-width="3.400"/><path d="M5 6 C12 4 8 13 13 14 C16 14.500 16 15 17 15.500" fill="none" stroke="#4fb9c6" stroke-width="1.800"/><rect x="3" y="4" width="4" height="4" fill="#4fb9c6" stroke="#2d3d46" stroke-width="0.900"/><rect x="15.500" y="13.500" width="4" height="4" fill="#4fb9c6" stroke="#2d3d46" stroke-width="0.900"/></svg>
<div class="r" style="left:467px;top:52px;width:21.8px;height:21.7px;background:#5285a6;"></div>
<svg class="r" style="left:467px;top:52px;" width="22" height="22" viewBox="0 0 22 22"><path d="M11 3.500 L18.500 11 L11 18.500 L3.500 11Z" fill="#4fb9c6" stroke="#2d3d46" stroke-width="1"/><path d="M7.200 7.200 L14.800 14.800 M14.800 7.200 L7.200 14.800" stroke="#2d3d46" stroke-width="1"/></svg>
<div class="r" style="left:490.3px;top:52px;width:21.8px;height:21.7px;background:#5285a6;"></div>
<svg class="r" style="left:490.3px;top:52px;" width="22" height="22" viewBox="0 0 22 22"><rect x="5" y="5" width="12" height="12" fill="#4fb9c6" stroke="#2d3d46" stroke-width="1"/><path d="M9 9 H14 V14 H8Z" fill="#666" stroke="#2d3d46" stroke-width="0.800"/><rect x="3" y="3" width="4" height="4" fill="#4fb9c6" stroke="#2d3d46" stroke-width="0.900"/><rect x="15" y="3" width="4" height="4" fill="#4fb9c6" stroke="#2d3d46" stroke-width="0.900"/><rect x="3" y="15" width="4" height="4" fill="#4fb9c6" stroke="#2d3d46" stroke-width="0.900"/><rect x="15" y="15" width="4" height="4" fill="#4fb9c6" stroke="#2d3d46" stroke-width="0.900"/></svg>
<div class="r" style="left:513.3px;top:52px;width:21.8px;height:21.7px;background:#5285a6;"></div>
<svg class="r" style="left:513.3px;top:52px;" width="22" height="22" viewBox="0 0 22 22"><circle cx="6" cy="5" r="1.8" fill="#4fb9c6" stroke="#2d3d46" stroke-width="0.800"/><circle cx="11" cy="4.5" r="2" fill="#4fb9c6" stroke="#2d3d46" stroke-width="0.800"/><circle cx="16" cy="5.5" r="2.2" fill="#4fb9c6" stroke="#2d3d46" stroke-width="0.800"/><circle cx="8" cy="10" r="2.2" fill="#4fb9c6" stroke="#2d3d46" stroke-width="0.800"/><circle cx="13.5" cy="10.5" r="2.6" fill="#4fb9c6" stroke="#2d3d46" stroke-width="0.800"/><circle cx="5" cy="15" r="1.8" fill="#4fb9c6" stroke="#2d3d46" stroke-width="0.800"/><circle cx="10" cy="16" r="2.2" fill="#4fb9c6" stroke="#2d3d46" stroke-width="0.800"/><circle cx="16" cy="16.5" r="1.8" fill="#4fb9c6" stroke="#2d3d46" stroke-width="0.800"/><circle cx="18" cy="11" r="1.5" fill="#4fb9c6" stroke="#2d3d46" stroke-width="0.800"/></svg>
<div class="r" style="left:536.2px;top:52px;width:21.8px;height:21.7px;background:#5285a6;"></div>
<svg class="r" style="left:536.2px;top:52px;" width="22" height="22" viewBox="0 0 22 22"><rect x="3.500" y="8" width="16" height="9.500" fill="#4fb9c6" stroke="#2d3d46" stroke-width="1"/><rect x="3.500" y="3.500" width="16" height="3.500" fill="#d4d4d4" stroke="#2d3d46" stroke-width="0.800"/><path d="M6 3.500 L8 7 M10 3.500 L12 7 M14 3.500 L16 7" stroke="#2d3d46" stroke-width="1.200"/><circle cx="6.500" cy="15.500" r="3.600" fill="#4fb9c6" stroke="#2d3d46" stroke-width="1"/></svg>
<div class="r" style="left:559.2px;top:52px;width:21.8px;height:21.7px;background:#5285a6;"></div>
<svg class="r" style="left:559.2px;top:52px;" width="22" height="22" viewBox="0 0 22 22"><path d="M7.500 8 A3.800 3.800 0 1 1 12.500 11 Q11.200 12 11.200 14" fill="none" stroke="#2d3d46" stroke-width="3.400"/><path d="M7.500 8 A3.800 3.800 0 1 1 12.500 11 Q11.200 12 11.200 14" fill="none" stroke="#4fb9c6" stroke-width="1.800"/><circle cx="11.200" cy="17.500" r="1.700" fill="#4fb9c6" stroke="#2d3d46" stroke-width="0.800"/></svg>
<svg class="r" style="left:587.5px;top:55px;" width="13" height="16" viewBox="0 0 13 16"><path d="M3.200 7 V4.500 A3.300 3.300 0 0 1 9.800 4.500 V7" stroke="#d4d4d4" stroke-width="2" fill="none"/><rect x="0.5" y="6.500" width="12" height="9.500" rx="1" fill="#d4d4d4"/><circle cx="6.500" cy="10.500" r="1.300" fill="#444"/><rect x="6" y="11" width="1" height="2.500" fill="#444"/></svg>
<svg class="r" style="left:608px;top:55px;" width="18" height="17" viewBox="0 0 18 17"><rect x="5" y="0.5" width="10" height="10" fill="#d4d4d4"/><rect x="0.800" y="2.500" width="11" height="11" fill="none" stroke="#d4d4d4" stroke-width="1.200" stroke-dasharray="3 2"/><path d="M9.00 4.00 L9.00 14.92 L11.66 12.55 L13.56 16.82 L15.46 15.97 L13.56 11.89 L17.07 11.89Z" fill="#e6e6e6" stroke="#3a3a3a" stroke-width="0.8"/></svg>
<svg class="r" style="left:653px;top:54px;" width="19" height="19" viewBox="0 0 19 19"><path d="M3.240 11.580 A6.300 6.300 0 1 1 14.500 7.700" fill="none" stroke="#d4d4d4" stroke-width="3.300"/><path d="M1.600 9.200 L5.200 8.300 M12.700 5.600 L16.300 5.700" stroke="#444" stroke-width="0.900"/><path d="M7 11 H18 M7 15 H18 M10 8 V18 M14.500 8 V18" stroke="#4fb9c6" stroke-width="1.100"/></svg>
<svg class="r" style="left:676px;top:54px;" width="19" height="19" viewBox="0 0 19 19"><path d="M3.240 11.580 A6.300 6.300 0 1 1 14.500 7.700" fill="none" stroke="#d4d4d4" stroke-width="3.300"/><path d="M1.600 9.200 L5.200 8.300 M12.700 5.600 L16.300 5.700" stroke="#444" stroke-width="0.900"/><path d="M6 17 C6 12 10 12 13 11 C16 10 17 8 17 5" fill="none" stroke="#4fb9c6" stroke-width="1.500"/></svg>
<svg class="r" style="left:699px;top:54px;" width="19" height="19" viewBox="0 0 19 19"><path d="M3.240 11.580 A6.300 6.300 0 1 1 14.500 7.700" fill="none" stroke="#d4d4d4" stroke-width="3.300"/><path d="M1.600 9.200 L5.200 8.300 M12.700 5.600 L16.300 5.700" stroke="#444" stroke-width="0.900"/><circle cx="13.500" cy="15" r="2.300" fill="#4fb9c6"/></svg>
<svg class="r" style="left:722px;top:54px;" width="19" height="19" viewBox="0 0 19 19"><path d="M3.240 11.580 A6.300 6.300 0 1 1 14.500 7.700" fill="none" stroke="#d4d4d4" stroke-width="3.300"/><path d="M1.600 9.200 L5.200 8.300 M12.700 5.600 L16.300 5.700" stroke="#444" stroke-width="0.900"/><circle cx="12" cy="14" r="2" fill="none" stroke="#4fb9c6" stroke-width="1.100"/><path d="M12 10.500 V12 M12 16 V17.500 M8.500 14 H10 M14 14 H15.500" stroke="#4fb9c6" stroke-width="1"/><circle cx="15.500" cy="2.500" r="1.500" fill="none" stroke="#4fb9c6" stroke-width="1"/></svg>
<svg class="r" style="left:745px;top:54px;" width="19" height="19" viewBox="0 0 19 19"><path d="M3.240 11.580 A6.300 6.300 0 1 1 14.500 7.700" fill="none" stroke="#d4d4d4" stroke-width="3.300"/><path d="M1.600 9.200 L5.200 8.300 M12.700 5.600 L16.300 5.700" stroke="#444" stroke-width="0.900"/><path d="M5 9 L12 4 L17 11 L10 16Z M8.500 6.500 L13.500 13.500 M7.500 12.500 L14.500 7.500" fill="none" stroke="#4fb9c6" stroke-width="1"/></svg>
<svg class="r" style="left:768px;top:54px;" width="19" height="19" viewBox="0 0 19 19"><path d="M3.240 11.580 A6.300 6.300 0 1 1 14.500 7.700" fill="none" stroke="#d4d4d4" stroke-width="3.300"/><path d="M1.600 9.200 L5.200 8.300 M12.700 5.600 L16.300 5.700" stroke="#444" stroke-width="0.900"/></svg>
<svg class="r" style="left:793.5px;top:61px;" width="7" height="5" viewBox="0 0 7 5"><path d="M0 0.5 H6 L3 4Z" fill="#9a9a9a"/></svg>
<div class="r" style="left:806.3px;top:52.5px;width:99.5px;height:21px;background:#444;border:1px solid #565656;border-radius:3px;"></div>
<span class="t" style="left:812.50px;top:58.19px;font-size:11px;color:#dcdcdc;letter-spacing:-0.071px;">No Live Surface</span>
<svg class="r" style="left:935.5px;top:61px;" width="7" height="5" viewBox="0 0 7 5"><path d="M0 0.5 H6 L3 4Z" fill="#9a9a9a"/></svg>
<div class="r" style="left:948.3px;top:52.5px;width:99.2px;height:21px;background:#444;border:1px solid #565656;border-radius:3px;"></div>
<span class="t" style="left:954.50px;top:58.19px;font-size:11px;color:#dcdcdc;letter-spacing:0.009px;">Symmetry: Off</span>
<svg class="r" style="left:1096.3px;top:54.7px;" width="17" height="16" viewBox="0 0 17 16"><path d="M0 0 H17 V3 H0Z" fill="#d4d4d4"/><path d="M2 0 L4 3 M6 0 L8 3 M10 0 L12 3 M14 0 L16 3" stroke="#444" stroke-width="1.400"/><rect x="0" y="4.500" width="17" height="11.500" fill="#d4d4d4"/><path d="M2.500 10.500 Q8.500 4.500 14.500 10.500 Q8.500 15.500 2.500 10.500Z" fill="#444"/><circle cx="8.500" cy="10.200" r="2.200" fill="#d4d4d4"/><circle cx="8.500" cy="10.200" r="1" fill="#444"/></svg>
<svg class="r" style="left:1119.5px;top:54.7px;" width="17" height="16" viewBox="0 0 17 16"><path d="M0 0 H17 V3 H0Z" fill="#d4d4d4"/><path d="M2 0 L4 3 M6 0 L8 3 M10 0 L12 3 M14 0 L16 3" stroke="#444" stroke-width="1.400"/><rect x="0" y="4.500" width="17" height="11.500" fill="#d4d4d4"/></svg>
<svg class="r" style="left:1142.5px;top:54.7px;" width="17" height="16" viewBox="0 0 17 16"><path d="M0 0 H17 V3 H0Z" fill="#d4d4d4"/><path d="M2 0 L4 3 M6 0 L8 3 M10 0 L12 3 M14 0 L16 3" stroke="#444" stroke-width="1.400"/><rect x="0" y="4.500" width="17" height="11.500" fill="#d4d4d4"/></svg>
<span class="t" style="left:1144.50px;top:61.18px;font-size:9px;color:#3c3c3c;letter-spacing:-0.668px;font-weight:bold;">IPR</span>
<svg class="r" style="left:1165.5px;top:54.7px;" width="17" height="16" viewBox="0 0 17 16"><path d="M0 0 H17 V3 H0Z" fill="#d4d4d4"/><path d="M2 0 L4 3 M6 0 L8 3 M10 0 L12 3 M14 0 L16 3" stroke="#444" stroke-width="1.400"/><rect x="0" y="4.500" width="17" height="11.500" fill="#d4d4d4"/><circle cx="13.500" cy="12.500" r="5" fill="#444"/><circle cx="13.500" cy="12.500" r="2.600" fill="none" stroke="#3fa9c9" stroke-width="1.800"/><g stroke="#3fa9c9" stroke-width="1.500"><path d="M13.500 8.200 V9.600 M13.500 15.400 V16.800 M9.200 12.500 H10.600 M16.400 12.500 H17.800 M10.500 9.500 L11.500 10.500 M15.500 14.500 L16.500 15.500 M10.500 15.500 L11.500 14.500 M15.500 10.500 L16.500 9.500"/></g></svg>
<svg class="r" style="left:1189px;top:54px;" width="17" height="17.5" viewBox="0 0 17 17.5"><circle cx="8.500" cy="8.700" r="8.500" fill="#4fb9c6"/><circle cx="9.500" cy="7.700" r="4.300" fill="#444"/><circle cx="10" cy="7.400" r="3" fill="#d4d4d4"/></svg>
<svg class="r" style="left:1211.7px;top:54.7px;" width="17" height="16" viewBox="0 0 17 16"><path d="M0 0 H17 V3 H0Z" fill="#d4d4d4"/><path d="M2 0 L4 3 M6 0 L8 3 M10 0 L12 3 M14 0 L16 3" stroke="#444" stroke-width="1.400"/><path d="M0 4.500 H17 V8 H8 V16 H0Z" fill="#d4d4d4"/><path d="M12.500 7 L18 9.500 L12.500 12 L7 9.500Z" fill="#4fb9c6"/><path d="M7 11.500 L12.500 14 L18 11.500 M7 13.500 L12.500 16 L18 13.500" fill="none" stroke="#4fb9c6" stroke-width="1.300"/></svg>
<svg class="r" style="left:1235px;top:54px;" width="18" height="18" viewBox="0 0 18 18"><path d="M7.500 8.500 L13.500 1.500" stroke="#d4d4d4" stroke-width="2.600" stroke-linecap="round"/><path d="M3.500 9 L8 7 L10 10.500 L6 12.500Z" fill="#d4d4d4"/><path d="M0.500 10.500 L3 10 M1.500 15 L4 13 M0.800 6 L3 7" stroke="#4fb9c6" stroke-width="1.200"/><circle cx="12.500" cy="12.800" r="2.700" fill="none" stroke="#4fb9c6" stroke-width="1.900"/><g stroke="#4fb9c6" stroke-width="1.600"><path d="M12.500 8.300 V9.800 M12.500 15.800 V17.300 M8 12.800 H9.500 M15.500 12.800 H17 M9.300 9.600 L10.400 10.700 M14.600 14.900 L15.700 16 M9.300 16 L10.400 14.900 M14.600 10.700 L15.700 9.600"/></g></svg>
<svg class="r" style="left:1260.5px;top:56.7px;" width="11" height="12.5" viewBox="0 0 11 12.5"><rect x="0" y="0" width="3.600" height="12.500" fill="#d4d4d4"/><rect x="7.200" y="0" width="3.600" height="12.500" fill="#d4d4d4"/></svg>
<svg class="r" style="left:1310px;top:55.3px;" width="15" height="15" viewBox="0 0 15 15"><rect x="0.500" y="0.500" width="14" height="14" fill="none" stroke="#d4d4d4" stroke-width="1"/><path d="M7.500 0.500 V14.500 M0.500 7.500 H14.500" stroke="#d4d4d4" stroke-width="1"/><circle cx="7.500" cy="7.500" r="2" fill="#444" stroke="#d4d4d4" stroke-width="1"/></svg>
<span class="t" style="left:1335.00px;top:58.61px;font-size:10.5px;color:#c4c4c4;letter-spacing:-0.960px;">X:</span>
<span class="t" style="left:1386.30px;top:58.61px;font-size:10.5px;color:#c4c4c4;letter-spacing:-0.671px;">Y:</span>
<span class="t" style="left:1436.50px;top:58.61px;font-size:10.5px;color:#c4c4c4;letter-spacing:-0.665px;">Z:</span>
<div class="r" style="left:1346.2px;top:53px;width:37.5px;height:19.5px;background:#2b2b2b;border-radius:3px;"></div>
<div class="r" style="left:1396.2px;top:53px;width:37.6px;height:19.5px;background:#2b2b2b;border-radius:3px;"></div>
<div class="r" style="left:1447.2px;top:53px;width:37.8px;height:19.5px;background:#2b2b2b;border-radius:3px;"></div>
<div class="r" style="left:1509px;top:52.4px;width:120px;height:21.2px;background:#5d5d5d;border-radius:1px;"></div>
<svg class="r" style="left:1514px;top:54px;" width="17" height="18" viewBox="0 0 17 18"><path d="M0.500 16.500 C0.500 12.500 4 12.500 5.500 11 V9.500 C3.500 7 3.500 1 8.500 1 C13.500 1 13.500 7 11.500 9.500 V11 C13 12.500 16.500 12.500 16.500 16.500Z" fill="#f0f0f0" stroke="#222" stroke-width="0.900"/><path d="M5.500 11.500 L8.500 16 L11.500 11.500" fill="#bbb"/></svg>
<span class="t" style="left:1535.00px;top:56.57px;font-size:13.5px;color:#f0f0f0;letter-spacing:-0.647px;">Sign In</span>
<svg class="r" style="left:1615px;top:61px;" width="11" height="6" viewBox="0 0 11 6"><path d="M0.500 0 H9.500 L5 5Z" fill="#d6d6d6"/></svg>
<svg class="r" style="left:1805px;top:53px;" width="18" height="20" viewBox="0 0 18 20"><path d="M1 6 L8 3 L14 5.500 V15 L8 18.500 L1 15Z" fill="#d4d4d4"/><path d="M8 9 L1.500 6.300 M8 9 V18 M8 9 L13.500 6 M4.500 7.500 V16.500 M1 10.500 L8 13.500 L14 10.500 M11 7.500 V16.500" stroke="#444" stroke-width="0.900" fill="none"/><path d="M8 3.500 L12 1 H17.500 V3.500 H16 V17 H13.500 V5" fill="#d4d4d4"/></svg>
<svg class="r" style="left:1829px;top:53px;" width="18" height="20" viewBox="0 0 18 20"><circle cx="9" cy="3" r="2.200" fill="#d4d4d4"/><rect x="5.500" y="6.500" width="7" height="7" fill="none" stroke="#d4d4d4" stroke-width="1.600"/><path d="M6.500 13.500 V19 M11.500 13.500 V19 M0.500 7.500 H4 M14 7.500 H17.500" stroke="#d4d4d4" stroke-width="1.700" stroke-dasharray="2 1"/></svg>
<svg class="r" style="left:1852px;top:53.5px;" width="18" height="19" viewBox="0 0 18 19"><rect x="6" y="0.800" width="11" height="3.400" fill="none" stroke="#d4d4d4" stroke-width="1.200"/><rect x="6" y="7.800" width="11" height="3.400" fill="none" stroke="#d4d4d4" stroke-width="1.200"/><rect x="9.500" y="8.300" width="4" height="2.400" fill="#d4d4d4"/><rect x="6" y="14.800" width="11" height="3.400" fill="none" stroke="#d4d4d4" stroke-width="1.200"/><path d="M0 2.500 H4 M1.500 9.500 H5 M0 16.500 H4" stroke="#d4d4d4" stroke-width="1.400"/></svg>
<svg class="r" style="left:1875px;top:53.5px;" width="18" height="19" viewBox="0 0 18 19"><path d="M1 1 H3.500 V3.500 H1Z M1 8 H3.500 V10.500 H1Z M1 15 H3.500 V17.500 H1Z" fill="#d4d4d4"/><path d="M5 2.200 H9 M5 9.200 H11 M5 16.200 H11" stroke="#d4d4d4" stroke-width="1.400"/><path d="M9 1 L11 0 H17.500 V3 H15.500 V18 H12.500 V3 H9Z" fill="#d4d4d4"/></svg>
<div class="r" style="left:1895px;top:52px;width:22px;height:22px;background:#5285a6;"></div>
<svg class="r" style="left:1897px;top:54px;" width="18" height="18" viewBox="0 0 18 18"><path d="M9 0.500 L17.500 5 L9 9.500 L0.500 5Z" fill="#e8e8e8" stroke="#333" stroke-width="0.800"/><path d="M6 4.300 H12 M6 5.800 H12" stroke="#444" stroke-width="0.700"/><path d="M0.500 8 L9 12.500 L17.500 8 M0.500 11 L9 15.500 L17.500 11 M0.500 14 L9 18 L17.500 14" fill="none" stroke="#4fb9c6" stroke-width="1.400"/></svg>
<svg class="r" style="left:2px;top:175px;" width="38" height="5" viewBox="0 0 38 5"><rect x="0" y="0" width="1" height="1" fill="#6c6c6c"/><rect x="1" y="2" width="1" height="1" fill="#6c6c6c"/><rect x="2" y="0" width="1" height="1" fill="#6c6c6c"/><rect x="3" y="2" width="1" height="1" fill="#6c6c6c"/><rect x="4" y="0" width="1" height="1" fill="#6c6c6c"/><rect x="5" y="2" width="1" height="1" fill="#6c6c6c"/><rect x="6" y="0" width="1" height="1" fill="#6c6c6c"/><rect x="7" y="2" width="1" height="1" fill="#6c6c6c"/><rect x="8" y="0" width="1" height="1" fill="#6c6c6c"/><rect x="9" y="2" width="1" height="1" fill="#6c6c6c"/><rect x="10" y="0" width="1" height="1" fill="#6c6c6c"/><rect x="11" y="2" width="1" height="1" fill="#6c6c6c"/><rect x="12" y="0" width="1" height="1" fill="#6c6c6c"/><rect x="13" y="2" width="1" height="1" fill="#6c6c6c"/><rect x="14" y="0" width="1" height="1" fill="#6c6c6c"/><rect x="15" y="2" width="1" height="1" fill="#6c6c6c"/><rect x="16" y="0" width="1" height="1" fill="#6c6c6c"/><rect x="17" y="2" width="1" height="1" fill="#6c6c6c"/><rect x="18" y="0" width="1" height="1" fill="#6c6c6c"/><rect x="19" y="2" width="1" height="1" fill="#6c6c6c"/><rect x="20" y="0" width="1" height="1" fill="#6c6c6c"/><rect x="21" y="2" width="1" height="1" fill="#6c6c6c"/><rect x="22" y="0" width="1" height="1" fill="#6c6c6c"/><rect x="23" y="2" width="1" height="1" fill="#6c6c6c"/><rect x="24" y="0" width="1" height="1" fill="#6c6c6c"/><rect x="25" y="2" width="1" height="1" fill="#6c6c6c"/><rect x="26" y="0" width="1" height="1" fill="#6c6c6c"/><rect x="27" y="2" width="1" height="1" fill="#6c6c6c"/><rect x="28" y="0" width="1" height="1" fill="#6c6c6c"/><rect x="29" y="2" width="1" height="1" fill="#6c6c6c"/><rect x="30" y="0" width="1" height="1" fill="#6c6c6c"/><rect x="31" y="2" width="1" height="1" fill="#6c6c6c"/><rect x="32" y="0" width="1" height="1" fill="#6c6c6c"/><rect x="33" y="2" width="1" height="1" fill="#6c6c6c"/><rect x="34" y="0" width="1" height="1" fill="#6c6c6c"/><rect x="35" y="2" width="1" height="1" fill="#6c6c6c"/><rect x="36" y="0" width="1" height="1" fill="#6c6c6c"/><rect x="37" y="2" width="1" height="1" fill="#6c6c6c"/></svg>
<div class="r" style="left:44.5px;top:172px;width:3px;height:768px;background:#3c3c3c;"></div>
<svg class="r" style="left:10px;top:183px;" width="28" height="34" viewBox="0 0 28 34"><path d="M7 2 V27 L12.500 22 L16.500 31.500 L21 29.500 L17 20.500 H24.500Z" fill="#dcdcdc"/></svg>
<svg class="r" style="left:5px;top:223px;" width="34" height="34" viewBox="0 0 34 34"><ellipse cx="15" cy="13.500" rx="12.500" ry="6.500" transform="rotate(-38 15 13.500)" fill="none" stroke="#4fc0c0" stroke-width="2.200" stroke-dasharray="5 2.500"/><path d="M17 10 V30 L21.500 26 L24.500 33.500 L28 32 L25 24.500 H31Z" fill="#dcdcdc" stroke="#444" stroke-width="0.800"/></svg>
<svg class="r" style="left:5px;top:261px;" width="34" height="33" viewBox="0 0 34 33"><ellipse cx="14" cy="18" rx="13" ry="7.500" transform="rotate(42 14 18)" fill="none" stroke="#4fc0c0" stroke-width="2.200" stroke-dasharray="5 2.500"/><path d="M10.500 18.500 C13 15 16 13 19 12.500 L21 15.500 C19 19 15 20.500 10.500 18.500Z" fill="#dcdcdc"/><path d="M20 12 L30 2" stroke="#dcdcdc" stroke-width="3" stroke-linecap="round"/></svg>
<div class="r" style="left:4px;top:295px;width:36px;height:36px;background:#5285a6;"></div>
<svg class="r" style="left:4px;top:295px;" width="36" height="36" viewBox="0 0 36 36"><rect x="11.500" y="11.500" width="13" height="13" fill="#dcdcdc" stroke="#2c3e4a" stroke-width="0.900"/><path d="M18 3.500 L22 7.500 H14Z M18 32.500 L22 28.500 H14Z M3.500 18 L7.500 14 V22Z M32.500 18 L28.500 14 V22Z" fill="#4fc0c0" stroke="#2c4a58" stroke-width="0.800"/></svg>
<svg class="r" style="left:4px;top:333px;" width="36" height="34" viewBox="0 0 36 34"><path d="M18 9 L27 17.500 L18 26 L9 17.500Z" fill="#dcdcdc"/><path d="M16 31 A14 14 0 1 1 32 17" fill="none" stroke="#4fc0c0" stroke-width="1.500"/><path d="M29.500 16 L32 21 L34.500 16Z" fill="#4fc0c0"/></svg>
<svg class="r" style="left:8px;top:372px;" width="30" height="30" viewBox="0 0 30 30"><rect x="2" y="2.500" width="25" height="24" fill="none" stroke="#4fc0c0" stroke-width="1.300" stroke-dasharray="4 2.500"/><rect x="2" y="16" width="10.500" height="10.500" fill="#dcdcdc"/><path d="M11 12 H17 V18" fill="none" stroke="#4fc0c0" stroke-width="1.300"/></svg>
<svg class="r" style="left:9px;top:448px;" width="27" height="26" viewBox="0 0 27 26"><path d="M4 3 Q13 2 13 7 Q9 12 10 16 Q13 22 22 22" fill="none" stroke="#5fb0dc" stroke-width="1.500" stroke-dasharray="4 2.500"/><rect x="1" y="1" width="3.800" height="3.800" fill="#444" stroke="#5fb0dc" stroke-width="1"/><rect x="13" y="5" width="3.800" height="3.800" fill="#444" stroke="#5fb0dc" stroke-width="1"/><rect x="10" y="15" width="3.800" height="3.800" fill="#444" stroke="#5fb0dc" stroke-width="1"/><rect x="20" y="20" width="3.800" height="3.800" fill="#444" stroke="#5fb0dc" stroke-width="1"/></svg>
<div class="r" style="left:4px;top:483.7px;width:36px;height:2px;background:#8a8a8a;"></div>
<svg class="r" style="left:8px;top:495px;" width="28" height="28" viewBox="0 0 28 28"><rect x="0.500" y="0.500" width="27" height="27" fill="#d6d6d6" stroke="#d8d8d8" stroke-width="1"/><rect x="1.500" y="1.500" width="25" height="25" fill="none" stroke="#444" stroke-width="1"/><path d="M10.6 10.4 l3.400 -2.600 l3.400 2.600 l-3.400 2.600Z" fill="#333"/><path d="M6.8 13.6 l3.400 -2.600 l3.400 2.600 l-3.400 2.600Z" fill="#333"/><path d="M14.4 13.6 l3.400 -2.600 l3.400 2.600 l-3.400 2.600Z" fill="#333"/><path d="M10.6 16.8 l3.400 -2.600 l3.400 2.600 l-3.400 2.600Z" fill="#333"/></svg>
<svg class="r" style="left:8px;top:531.7px;" width="28" height="28" viewBox="0 0 28 28"><rect x="0.5" y="0.5" width="12.2" height="12.2" fill="#383838" stroke="#d0d0d0" stroke-width="1"/><path d="M3.1 6.6 h7 M6.6 3.1 v7" stroke="#e0e0e0" stroke-width="1.100"/><rect x="15" y="0" width="13" height="13.2" fill="#d6d6d6"/><path d="M18.1 6.6 l3.400 -2.600 l3.400 2.600 l-3.400 2.600Z" fill="#333"/><rect x="0.5" y="15.5" width="12.2" height="12.2" fill="#383838" stroke="#d0d0d0" stroke-width="1"/><path d="M3.1 21.6 h7 M6.6 18.1 v7" stroke="#e0e0e0" stroke-width="1.100"/><rect x="15.5" y="15.5" width="12.2" height="12.2" fill="#383838" stroke="#d0d0d0" stroke-width="1"/><path d="M18.1 21.6 h7 M21.6 18.1 v7" stroke="#e0e0e0" stroke-width="1.100"/></svg>
<svg class="r" style="left:8px;top:568.7px;" width="28" height="28" viewBox="0 0 28 28"><rect x="0.5" y="0.5" width="12.2" height="27" fill="#383838" stroke="#d0d0d0" stroke-width="1"/><path d="M3.1 14 h7 M6.6 10.5 v7" stroke="#e0e0e0" stroke-width="1.100"/><rect x="15" y="0" width="13" height="28" fill="#d6d6d6"/><path d="M18.1 14 l3.400 -2.600 l3.400 2.600 l-3.400 2.600Z" fill="#333"/></svg>
<div class="r" style="left:4px;top:602px;width:36px;height:36px;background:#5285a6;"></div>
<svg class="r" style="left:8px;top:606px;" width="28" height="28" viewBox="0 0 28 28"><rect x="0.500" y="0.500" width="27" height="27" fill="#3a3a3a" stroke="#d8d8d8" stroke-width="1"/><rect x="2.500" y="2.500" width="23" height="23" fill="none" stroke="#d8d8d8" stroke-width="0.800"/><path d="M6.500 6 V23 M6.500 10.500 H12 M6.500 16.500 H12 M6.500 22.500 H12 M8 5.500 H19 M13 10.500 H23 M13 16.500 H20 M13 22.500 H22" stroke="#d8d8d8" stroke-width="1.200" fill="none"/><rect x="5" y="4" width="3.200" height="3.200" fill="#eee"/><rect x="11" y="9" width="3.200" height="3.200" fill="#eee"/><rect x="11" y="15" width="3.200" height="3.200" fill="#eee"/><rect x="11" y="21" width="3.200" height="3.200" fill="#eee"/></svg>
<svg class="r" style="left:5.5px;top:897px;" width="34" height="31" viewBox="0 0 34 31"><path d="M0 1 L11 1 L17 13 L23 1 L33.500 0 L33.500 29 L24.500 30 L24.500 15 L19.500 25 L14.500 25 L9 14 L8 30 L0 29Z" fill="#3cc1c3"/><path d="M0 1 L11 1 L9 14 L8 30 L0 29Z" fill="#2a9aa3"/><path d="M23 1 L33.500 0 L33.500 29 L24.500 30Z" fill="#1f8791"/><path d="M11 1 L17 13 L19.500 25 L14.500 25 L9 14Z" fill="#63d8d6"/><path d="M17 13 L23 1 L24.500 15 L19.500 25Z" fill="#2fb0b5"/></svg>
<div class="r" style="left:47.5px;top:172px;width:264px;height:18px;background:#373737;"></div>
<div class="r" style="left:48.3px;top:173.5px;width:63.5px;height:17px;background:#444444;border-radius:2px 2px 0 0;border-top:1px solid #505050;border-left:1px solid #4c4c4c;"></div>
<span class="t" style="left:58.00px;top:177.69px;font-size:11px;color:#eeeeee;letter-spacing:0.561px;">Outliner</span>
<span class="t" style="left:57.30px;top:195.69px;font-size:11px;color:#e0e0e0;letter-spacing:0.091px;">Display</span>
<span class="t" style="left:109.50px;top:195.69px;font-size:11px;color:#e0e0e0;letter-spacing:0.246px;">Show</span>
<span class="t" style="left:153.30px;top:195.69px;font-size:11px;color:#e0e0e0;letter-spacing:0.144px;">Help</span>
<svg class="r" style="left:55px;top:217px;" width="16" height="17" viewBox="0 0 16 17"><rect x="2.500" y="2.500" width="10" height="11" fill="none" stroke="#6a6a6a" stroke-width="1.400" stroke-dasharray="5 3"/><path d="M0 0 L4 2 L0 4Z M0 12 L4 14 L0 16Z M15 0 L11 2 L15 4Z M15 12 L11 14 L15 16Z" fill="#6a6a6a"/></svg>
<div class="r" style="left:77px;top:217px;width:228px;height:18px;background:#2b2b2b;border-radius:3px;"></div>
<span class="t" style="left:80.50px;top:222.19px;font-size:11px;color:#8a8a8a;letter-spacing:-0.224px;">Search...</span>
<svg class="r" style="left:290.5px;top:224px;" width="11" height="6" viewBox="0 0 11 6"><path d="M0.500 0 H10 L5.200 5Z" fill="#e0e0e0"/></svg>
<div class="r" style="left:50px;top:237px;width:244.5px;height:687.5px;background:#373737;"></div>
<div class="r" style="left:294.5px;top:237px;width:12.5px;height:676px;background:#414141;"></div>
<svg class="r" style="left:296px;top:240px;" width="10" height="8" viewBox="0 0 10 8"><path d="M0.500 6 L5 1.500 L9.500 6Z" fill="#d8d8d8"/></svg>
<div class="r" style="left:296.5px;top:250px;width:9px;height:649px;background:#5d5d5d;border-radius:4.500px;"></div>
<svg class="r" style="left:296px;top:902px;" width="10" height="8" viewBox="0 0 10 8"><path d="M0.500 1.500 L5 6 L9.500 1.500Z" fill="#d8d8d8"/></svg>
<div class="r" style="left:50px;top:913.5px;width:256px;height:10.5px;background:#373737;"></div>
<svg class="r" style="left:53px;top:914.5px;" width="6" height="9" viewBox="0 0 6 9"><path d="M5 0.500 V8 L0.800 4.200Z" fill="#d8d8d8"/></svg>
<svg class="r" style="left:285px;top:914.5px;" width="6" height="9" viewBox="0 0 6 9"><path d="M0.800 0.500 V8 L5 4.200Z" fill="#d8d8d8"/></svg>
<div class="r" style="left:63px;top:914px;width:218px;height:9.5px;background:#5d5d5d;border-radius:4.700px;"></div>
<svg class="r" style="left:135px;top:926px;" width="86" height="1" viewBox="0 0 86 1"><rect x="0" y="0" width="1" height="1" fill="#7a7a7a"/><rect x="2" y="0" width="1" height="1" fill="#7a7a7a"/><rect x="4" y="0" width="1" height="1" fill="#7a7a7a"/><rect x="6" y="0" width="1" height="1" fill="#7a7a7a"/><rect x="8" y="0" width="1" height="1" fill="#7a7a7a"/><rect x="10" y="0" width="1" height="1" fill="#7a7a7a"/><rect x="12" y="0" width="1" height="1" fill="#7a7a7a"/><rect x="14" y="0" width="1" height="1" fill="#7a7a7a"/><rect x="16" y="0" width="1" height="1" fill="#7a7a7a"/><rect x="18" y="0" width="1" height="1" fill="#7a7a7a"/><rect x="20" y="0" width="1" height="1" fill="#7a7a7a"/><rect x="22" y="0" width="1" height="1" fill="#7a7a7a"/><rect x="24" y="0" width="1" height="1" fill="#7a7a7a"/><rect x="26" y="0" width="1" height="1" fill="#7a7a7a"/><rect x="28" y="0" width="1" height="1" fill="#7a7a7a"/><rect x="30" y="0" width="1" height="1" fill="#7a7a7a"/><rect x="32" y="0" width="1" height="1" fill="#7a7a7a"/><rect x="34" y="0" width="1" height="1" fill="#7a7a7a"/><rect x="36" y="0" width="1" height="1" fill="#7a7a7a"/><rect x="38" y="0" width="1" height="1" fill="#7a7a7a"/><rect x="40" y="0" width="1" height="1" fill="#7a7a7a"/><rect x="42" y="0" width="1" height="1" fill="#7a7a7a"/><rect x="44" y="0" width="1" height="1" fill="#7a7a7a"/><rect x="46" y="0" width="1" height="1" fill="#7a7a7a"/><rect x="48" y="0" width="1" height="1" fill="#7a7a7a"/><rect x="50" y="0" width="1" height="1" fill="#7a7a7a"/><rect x="52" y="0" width="1" height="1" fill="#7a7a7a"/><rect x="54" y="0" width="1" height="1" fill="#7a7a7a"/><rect x="56" y="0" width="1" height="1" fill="#7a7a7a"/><rect x="58" y="0" width="1" height="1" fill="#7a7a7a"/><rect x="60" y="0" width="1" height="1" fill="#7a7a7a"/><rect x="62" y="0" width="1" height="1" fill="#7a7a7a"/><rect x="64" y="0" width="1" height="1" fill="#7a7a7a"/><rect x="66" y="0" width="1" height="1" fill="#7a7a7a"/><rect x="68" y="0" width="1" height="1" fill="#7a7a7a"/><rect x="70" y="0" width="1" height="1" fill="#7a7a7a"/><rect x="72" y="0" width="1" height="1" fill="#7a7a7a"/><rect x="74" y="0" width="1" height="1" fill="#7a7a7a"/><rect x="76" y="0" width="1" height="1" fill="#7a7a7a"/><rect x="78" y="0" width="1" height="1" fill="#7a7a7a"/><rect x="80" y="0" width="1" height="1" fill="#7a7a7a"/><rect x="82" y="0" width="1" height="1" fill="#7a7a7a"/><rect x="84" y="0" width="1" height="1" fill="#7a7a7a"/></svg>
<div class="r" style="left:50px;top:337px;width:244.5px;height:20px;background:#5285a6;"></div>
<svg class="r" style="left:85.8px;top:242.5px;" width="15" height="9" viewBox="0 0 15 9"><rect x="0" y="0.500" width="9.500" height="8" rx="0.800" fill="#d8d8d8"/><path d="M10 4.500 L14.500 0.500 V8.500Z" fill="#d8d8d8"/></svg>
<span class="t" style="left:104.50px;top:241.69px;font-size:11px;color:#7e7e7e;letter-spacing:0.097px;">persp</span>
<svg class="r" style="left:85.8px;top:262.5px;" width="15" height="9" viewBox="0 0 15 9"><rect x="0" y="0.500" width="9.500" height="8" rx="0.800" fill="#d8d8d8"/><path d="M10 4.500 L14.500 0.500 V8.500Z" fill="#d8d8d8"/></svg>
<span class="t" style="left:104.50px;top:261.69px;font-size:11px;color:#7e7e7e;letter-spacing:0.570px;">top</span>
<svg class="r" style="left:85.8px;top:282.5px;" width="15" height="9" viewBox="0 0 15 9"><rect x="0" y="0.500" width="9.500" height="8" rx="0.800" fill="#d8d8d8"/><path d="M10 4.500 L14.500 0.500 V8.500Z" fill="#d8d8d8"/></svg>
<span class="t" style="left:104.50px;top:281.69px;font-size:11px;color:#e6e6e6;letter-spacing:0.798px;">front</span>
<svg class="r" style="left:85.8px;top:302.5px;" width="15" height="9" viewBox="0 0 15 9"><rect x="0" y="0.500" width="9.500" height="8" rx="0.800" fill="#d8d8d8"/><path d="M10 4.500 L14.500 0.500 V8.500Z" fill="#d8d8d8"/></svg>
<span class="t" style="left:104.50px;top:301.69px;font-size:11px;color:#7e7e7e;letter-spacing:-0.045px;">side</span>
<svg class="r" style="left:84px;top:319px;" width="18" height="17" viewBox="0 0 18 17"><path d="M5 4.500 L12.500 0.500 V9.500 L5 13.500Z" fill="#4fc0c0"/><path d="M1 11.500 L5.500 9 M12.500 9 L17 11.500 L9.500 16 L1 11.500 M7.500 12 H11" fill="none" stroke="#d8d8d8" stroke-width="1.100"/></svg>
<span class="t" style="left:104.00px;top:321.69px;font-size:11px;color:#7e7e7e;letter-spacing:-0.019px;">imagePlane1</span>
<svg class="r" style="left:70.5px;top:341px;" width="11" height="11" viewBox="0 0 11 11"><rect x="0.500" y="0.500" width="9" height="9" fill="none" stroke="#7fa2b9" stroke-width="1"/><path d="M2.500 5 H7.500 M5 2.500 V7.500" stroke="#9dbccf" stroke-width="1"/></svg>
<svg class="r" style="left:84px;top:339px;" width="18" height="16" viewBox="0 0 18 16"><path d="M4.500 1.500 H17 L12.500 14.500 H0.500Z" fill="#dcdcdc" stroke="#555" stroke-width="0.800"/><path d="M1 7.500 H9" stroke="#d42a2a" stroke-width="1.800"/><path d="M8 4.500 L13 7.500 L8 10.500Z" fill="#d42a2a"/></svg>
<span class="t" style="left:104.50px;top:341.69px;font-size:11px;color:#ffffff;letter-spacing:0.459px;">group1</span>
<svg class="r" style="left:84.5px;top:358.5px;" width="17" height="17" viewBox="0 0 17 17"><circle cx="8.500" cy="8.500" r="7.300" fill="#3a3a3a" stroke="#cccccc" stroke-width="1.100"/><rect x="7" y="5" width="6" height="6" fill="#4fc0c0"/><circle cx="6.500" cy="10.500" r="3" fill="#d8d8d8"/></svg>
<span class="t" style="left:104.50px;top:361.69px;font-size:11px;color:#dcdcdc;letter-spacing:0.308px;">defaultLightSet</span>
<svg class="r" style="left:84.5px;top:378.5px;" width="17" height="17" viewBox="0 0 17 17"><circle cx="8.500" cy="8.500" r="7.300" fill="#3a3a3a" stroke="#cccccc" stroke-width="1.100"/><rect x="7" y="5" width="6" height="6" fill="#4fc0c0"/><circle cx="6.500" cy="10.500" r="3" fill="#d8d8d8"/></svg>
<span class="t" style="left:104.50px;top:381.69px;font-size:11px;color:#dcdcdc;letter-spacing:0.292px;">defaultObjectSet</span>
<div class="r" style="left:311.5px;top:172px;width:2px;height:763px;background:#3b3b3b;"></div>
<div class="r" style="left:1439px;top:172px;width:2px;height:763px;background:#3b3b3b;"></div>
<div class="r" style="left:315px;top:175.5px;width:1121.5px;height:756px;background:#444444;border:1px solid #8c8c8c;"></div>
<span class="t" style="left:324.40px;top:179.69px;font-size:11px;color:#e4e4e4;letter-spacing:0.164px;">View</span>
<span class="t" style="left:364.60px;top:179.69px;font-size:11px;color:#e4e4e4;letter-spacing:0.233px;">Shading</span>
<span class="t" style="left:422.50px;top:179.69px;font-size:11px;color:#e4e4e4;letter-spacing:0.434px;">Lighting</span>
<span class="t" style="left:480.40px;top:179.69px;font-size:11px;color:#e4e4e4;letter-spacing:0.271px;">Show</span>
<span class="t" style="left:524.30px;top:179.69px;font-size:11px;color:#e4e4e4;letter-spacing:0.106px;">Renderer</span>
<span class="t" style="left:586.00px;top:179.69px;font-size:11px;color:#e4e4e4;letter-spacing:-0.105px;">Panels</span>
<svg class="r" style="left:319.2px;top:195.5px;" width="3" height="18" viewBox="0 0 3 18"><rect x="1" y="0" width="1" height="18" fill="#7a7a7a"/><rect x="0.5" y="4.5" width="2" height="9" rx="1" fill="#8a8a8a"/></svg>
<svg class="r" style="left:462.8px;top:195.5px;" width="3" height="18" viewBox="0 0 3 18"><rect x="1" y="0" width="1" height="18" fill="#7a7a7a"/><rect x="0.5" y="4.5" width="2" height="9" rx="1" fill="#8a8a8a"/></svg>
<svg class="r" style="left:606.8px;top:195.5px;" width="3" height="18" viewBox="0 0 3 18"><rect x="1" y="0" width="1" height="18" fill="#7a7a7a"/><rect x="0.5" y="4.5" width="2" height="9" rx="1" fill="#8a8a8a"/></svg>
<svg class="r" style="left:750.8px;top:195.5px;" width="3" height="18" viewBox="0 0 3 18"><rect x="1" y="0" width="1" height="18" fill="#7a7a7a"/><rect x="0.5" y="4.5" width="2" height="9" rx="1" fill="#8a8a8a"/></svg>
<svg class="r" style="left:837.8px;top:195.5px;" width="3" height="18" viewBox="0 0 3 18"><rect x="1" y="0" width="1" height="18" fill="#7a7a7a"/><rect x="0.5" y="4.5" width="2" height="9" rx="1" fill="#8a8a8a"/></svg>
<svg class="r" style="left:867.8px;top:195.5px;" width="3" height="18" viewBox="0 0 3 18"><rect x="1" y="0" width="1" height="18" fill="#7a7a7a"/><rect x="0.5" y="4.5" width="2" height="9" rx="1" fill="#8a8a8a"/></svg>
<svg class="r" style="left:935.8px;top:195.5px;" width="3" height="18" viewBox="0 0 3 18"><rect x="1" y="0" width="1" height="18" fill="#7a7a7a"/><rect x="0.5" y="4.5" width="2" height="9" rx="1" fill="#8a8a8a"/></svg>
<svg class="r" style="left:329px;top:195.7px;" width="16" height="16" viewBox="0 0 16 16"><rect x="0" y="4" width="9.500" height="8" rx="0.800" fill="#dadada"/><path d="M10 8 L14.500 4 V12Z" fill="#dadada"/></svg>
<svg class="r" style="left:347.5px;top:195.7px;" width="16" height="16" viewBox="0 0 16 16"><rect x="4" y="1" width="7" height="6" rx="0.800" fill="#dadada"/><path d="M11.500 4 L15 1 V7.500Z" fill="#dadada"/><rect x="0.500" y="8" width="7.500" height="7" fill="#4fb9c6"/><path d="M2 8 V6 A2.200 2.200 0 0 1 6.500 6 V8" fill="none" stroke="#4fb9c6" stroke-width="1.400"/><rect x="3.700" y="10.500" width="1.200" height="2.500" fill="#333"/></svg>
<svg class="r" style="left:366.5px;top:195.7px;" width="16" height="16" viewBox="0 0 16 16"><rect x="3" y="1" width="8" height="6" rx="0.800" fill="#dadada"/><path d="M11.500 4 L15 1 V7.500Z" fill="#dadada"/><circle cx="5" cy="10.500" r="2.600" fill="#444" stroke="#4fb9c6" stroke-width="1.800"/><g stroke="#4fb9c6" stroke-width="1.500"><path d="M5 6 V7.500 M5 13.500 V15 M0.500 10.500 H2 M8 10.500 H9.500 M1.800 7.300 L2.900 8.400 M7.100 12.600 L8.200 13.700 M1.800 13.700 L2.900 12.600 M7.100 8.400 L8.200 7.300"/></g></svg>
<svg class="r" style="left:389px;top:195.7px;" width="9" height="16" viewBox="0 0 9 16"><path d="M0.500 1 H7.500 V14.500 L4 11 L0.500 14.500Z" fill="#dadada"/></svg>
<svg class="r" style="left:404.5px;top:195.7px;" width="16" height="16" viewBox="0 0 16 16"><path d="M6 10 L11.500 1 V11.500 L6 13.500Z" fill="#4fb9c6"/><path d="M0.500 15 L5 8.500 M2 15 L6 9.500 M0.500 15 H11 L14.500 11 H9" fill="none" stroke="#dadada" stroke-width="1"/><path d="M2.500 13.500 H12" stroke="#dadada" stroke-width="0.800"/></svg>
<svg class="r" style="left:423px;top:195.7px;" width="16" height="16" viewBox="0 0 16 16"><path d="M4.500 0.500 V9 M0.500 5 H9 M4.500 0.500 L2.800 2.500 H6.200Z M0.500 5 L2.500 3.300 V6.700Z" stroke="#dadada" stroke-width="1.200" fill="#dadada"/><circle cx="10.500" cy="8.500" r="3.200" fill="none" stroke="#4fb9c6" stroke-width="1.600"/><path d="M8.500 11 L5 15" stroke="#4fb9c6" stroke-width="2"/></svg>
<svg class="r" style="left:443px;top:195.7px;" width="16" height="16" viewBox="0 0 16 16"><path d="M4 10 L11.500 1.500 L14 4 L6.500 12.500Z" fill="#dadada"/><path d="M1 15 L3.500 10.500 L6 13Z" fill="#4fb9c6"/><path d="M8 13.500 C9 16 13 15.500 12.500 12.500" fill="none" stroke="#dadada" stroke-width="1"/></svg>
<div class="r" style="left:471px;top:195px;width:18.5px;height:18.5px;background:#5285a6;"></div>
<svg class="r" style="left:472.5px;top:195.7px;" width="16" height="16" viewBox="0 0 16 16"><rect x="2" y="2.500" width="11.500" height="11.500" fill="#3a3a3a" stroke="#dadada" stroke-width="1.300"/><path d="M5.800 2.500 V14 M9.700 2.500 V14 M2 6.300 H13.500 M2 10.200 H13.500" stroke="#dadada" stroke-width="1.200"/></svg>
<svg class="r" style="left:492px;top:195.7px;" width="16" height="16" viewBox="0 0 16 16"><rect x="0.500" y="2" width="14" height="12.500" fill="#3a3a3a" stroke="#dadada" stroke-width="1"/><path d="M0.500 4 H14.500 M0.500 12.500 H14.500" stroke="#dadada" stroke-width="1"/><path d="M1.500 3 H13.500 M1.500 13.500 H13.500" stroke="#dadada" stroke-width="1" stroke-dasharray="1.500 1.500"/></svg>
<svg class="r" style="left:511px;top:195.7px;" width="16" height="16" viewBox="0 0 16 16"><rect x="0.500" y="2" width="14" height="12.500" fill="#3a3a3a" stroke="#dadada" stroke-width="1.200"/><circle cx="7.500" cy="8.200" r="2.800" fill="#4fb9c6"/></svg>
<div class="r" style="left:528.5px;top:195px;width:17.5px;height:18.5px;background:#565656;border:1px solid #3a3a3a;"></div>
<svg class="r" style="left:530px;top:195.7px;" width="16" height="16" viewBox="0 0 16 16"><circle cx="7.300" cy="8.600" r="3.600" fill="#464646"/></svg>
<svg class="r" style="left:549px;top:195.7px;" width="16" height="16" viewBox="0 0 16 16"><rect x="0.500" y="2" width="14" height="12.500" fill="#3a3a3a" stroke="#dadada" stroke-width="1.200"/><path d="M3 8.200 H12 M7.500 4 V12.500" stroke="#dadada" stroke-width="1" stroke-dasharray="1.500 1"/><rect x="5.500" y="6.500" width="4" height="3.400" fill="#4fb9c6"/></svg>
<svg class="r" style="left:568px;top:195.7px;" width="16" height="16" viewBox="0 0 16 16"><rect x="0.500" y="2" width="14" height="12.500" fill="#3a3a3a" stroke="#dadada" stroke-width="1.200"/><path d="M2.500 12.500 L6.500 7 L9 10 L10.500 8.500 L12.500 12.500Z" fill="#4fb9c6"/><circle cx="10.500" cy="5.500" r="1.500" fill="#4fb9c6"/></svg>
<svg class="r" style="left:587px;top:195.7px;" width="16" height="16" viewBox="0 0 16 16"><rect x="0.500" y="2" width="14" height="12.500" fill="#3a3a3a" stroke="#dadada" stroke-width="1.200"/><path d="M4 5 H11 V6.500 H8.300 V12 H6.700 V6.500 H4Z" fill="#4fb9c6"/></svg>
<svg class="r" style="left:617px;top:195.7px;" width="16" height="16" viewBox="0 0 16 16"><path d="M7.500 1 L14 4 V11.500 L7.500 15 L1 11.500 V4Z M1 4 L7.500 7 L14 4 M7.500 7 V15" fill="none" stroke="#dadada" stroke-width="1"/></svg>
<div class="r" style="left:634.3px;top:195px;width:17.5px;height:18.5px;background:#5285a6;"></div>
<svg class="r" style="left:635.5px;top:195.7px;" width="16" height="16" viewBox="0 0 16 16"><path d="M7.500 1 L14 4 V11.500 L7.500 15 L1 11.500 V4Z M1 4 L7.500 7 L14 4 M7.500 7 V15" fill="#56c4d6" stroke="#223" stroke-width="1"/></svg>
<svg class="r" style="left:655.5px;top:195.7px;" width="16" height="16" viewBox="0 0 16 16"><circle cx="7" cy="8" r="6.300" fill="#dadada"/><path d="M7 1.700 A6.300 6.300 0 0 1 7 14.300Z" fill="#444"/><g fill="#dadada"><rect x="8" y="3" width="1.800" height="1.800"/><rect x="10" y="5" width="1.800" height="1.800"/><rect x="8" y="7" width="1.800" height="1.800"/><rect x="10" y="9" width="1.800" height="1.800"/><rect x="8" y="11" width="1.800" height="1.800"/><rect x="11.800" y="7" width="1.500" height="1.800"/></g></svg>
<svg class="r" style="left:674.5px;top:195.7px;" width="16" height="16" viewBox="0 0 16 16"><path d="M7.500 1 L14 4 V11.500 L7.500 15 L1 11.500 V4Z M1 4 L7.500 7 L14 4 M7.500 7 V15" fill="#3a8a98" stroke="#dadada" stroke-width="1"/><path d="M4 5.500 V13 M11 5.500 V13 M1 8 L7.500 11 L14 8" fill="none" stroke="#dadada" stroke-width="0.800"/></svg>
<svg class="r" style="left:693.5px;top:195.7px;" width="16" height="16" viewBox="0 0 16 16"><circle cx="7" cy="8" r="6.300" fill="#dadada"/><rect x="1.5" y="3.5" width="1.900" height="1.900" fill="#444"/><rect x="1.5" y="7.3" width="1.900" height="1.900" fill="#444"/><rect x="1.5" y="11.1" width="1.900" height="1.900" fill="#444"/><rect x="5.3" y="3.5" width="1.900" height="1.900" fill="#444"/><rect x="5.3" y="7.3" width="1.900" height="1.900" fill="#444"/><rect x="5.3" y="11.1" width="1.900" height="1.900" fill="#444"/><rect x="9.1" y="3.5" width="1.900" height="1.900" fill="#444"/><rect x="9.1" y="7.3" width="1.900" height="1.900" fill="#444"/><rect x="9.1" y="11.1" width="1.900" height="1.900" fill="#444"/><rect x="3.4" y="1.6" width="1.900" height="1.900" fill="#444"/><rect x="3.4" y="5.4" width="1.900" height="1.900" fill="#444"/><rect x="3.4" y="9.2" width="1.900" height="1.900" fill="#444"/><rect x="3.4" y="13" width="1.900" height="1.900" fill="#444"/><rect x="7.2" y="1.6" width="1.900" height="1.900" fill="#444"/><rect x="7.2" y="5.4" width="1.900" height="1.900" fill="#444"/><rect x="7.2" y="9.2" width="1.900" height="1.900" fill="#444"/><rect x="7.2" y="13" width="1.900" height="1.900" fill="#444"/><rect x="11" y="1.6" width="1.900" height="1.900" fill="#444"/><rect x="11" y="5.4" width="1.900" height="1.900" fill="#444"/><rect x="11" y="9.2" width="1.900" height="1.900" fill="#444"/><rect x="11" y="13" width="1.900" height="1.900" fill="#444"/></svg>
<svg class="r" style="left:712px;top:195.7px;" width="16" height="16" viewBox="0 0 16 16"><circle cx="7.500" cy="7" r="3.300" fill="#dadada"/><rect x="6" y="10" width="3" height="3.500" fill="#dadada"/><g stroke="#dadada" stroke-width="1.200"><path d="M7.500 0.500 V2.200 M1 7 H2.800 M12.200 7 H14 M2.800 2.300 L4 3.500 M12.200 2.300 L11 3.500"/></g></svg>
<svg class="r" style="left:730.5px;top:195.7px;" width="16" height="16" viewBox="0 0 16 16"><circle cx="10.500" cy="7" r="4.500" fill="#4fb9c6"/><path d="M0.500 12 L7 8 M1.500 14 L9 10.500 M4 15 L11 12" stroke="#dadada" stroke-width="1.400"/></svg>
<svg class="r" style="left:761px;top:195.7px;" width="16" height="16" viewBox="0 0 16 16"><circle cx="8" cy="6" r="5" fill="#dadada"/><path d="M1 12 C4 9.500 9 13.500 14 10.500 M1 14.500 C4 12 9 16 14 13" fill="none" stroke="#4fb9c6" stroke-width="1.400"/></svg>
<svg class="r" style="left:780px;top:195.7px;" width="16" height="16" viewBox="0 0 16 16"><circle cx="4.500" cy="11" r="3.500" fill="#6a6a6a"/><circle cx="7" cy="9" r="3.800" fill="#8a8a8a"/><circle cx="10.500" cy="5.500" r="4" fill="#dadada"/></svg>
<svg class="r" style="left:799.5px;top:195.7px;" width="16" height="16" viewBox="0 0 16 16"><circle cx="7" cy="8" r="5" fill="none" stroke="#4fb9c6" stroke-width="2.400"/><circle cx="7" cy="8" r="5" fill="none" stroke="#dadada" stroke-width="2.400" stroke-dasharray="2 2" stroke-dashoffset="1" transform="rotate(90 7 8)" clip-path="inset(0 0 0 50%)"/></svg>
<div class="r" style="left:816px;top:195px;width:17.5px;height:18.5px;background:#4e4e4e;border:1px solid #3a3a3a;"></div>
<svg class="r" style="left:818px;top:195.7px;" width="16" height="16" viewBox="0 0 16 16"><rect x="2.500" y="3" width="7.500" height="7.500" fill="#41595c"/><rect x="6" y="6.500" width="7.500" height="7.500" fill="#4a686c"/></svg>
<svg class="r" style="left:848px;top:195.7px;" width="16" height="16" viewBox="0 0 16 16"><rect x="0.800" y="0.800" width="8.500" height="8.500" fill="none" stroke="#4fb9c6" stroke-width="1.300" stroke-dasharray="2.500 1.500"/><path d="M6.50 4.00 L6.50 13.78 L8.88 11.65 L10.58 15.47 L12.28 14.71 L10.58 11.05 L13.72 11.05Z" fill="#e6e6e6" stroke="#3a3a3a" stroke-width="0.8"/></svg>
<div class="r" style="left:876.5px;top:195.5px;width:17px;height:18px;background:#3a3a3a;"></div>
<svg class="r" style="left:877.7px;top:195.7px;" width="16" height="16" viewBox="0 0 16 16"><rect x="5" y="2" width="9" height="9" fill="#dadada"/><rect x="1" y="6" width="9" height="9" fill="#3a3a3a" stroke="#dadada" stroke-width="1.600"/></svg>
<div class="r" style="left:895.5px;top:195.5px;width:17px;height:18px;background:#3a3a3a;"></div>
<svg class="r" style="left:896.7px;top:195.7px;" width="16" height="16" viewBox="0 0 16 16"><rect x="5" y="2" width="9" height="9" fill="#3a3a3a" stroke="#dadada" stroke-width="1.600"/><rect x="1" y="6" width="9" height="9" fill="#dadada"/></svg>
<div class="r" style="left:915px;top:195.5px;width:17px;height:18px;background:#3a3a3a;"></div>
<svg class="r" style="left:916.2px;top:195.7px;" width="16" height="16" viewBox="0 0 16 16"><rect x="1" y="2" width="13" height="13" fill="#3a3a3a" stroke="#dadada" stroke-width="1.400"/><path d="M4 5 L11 12" stroke="#dadada" stroke-width="1.400"/><circle cx="4" cy="5" r="1.800" fill="#dadada"/><circle cx="11" cy="12" r="1.300" fill="#dadada"/></svg>
<svg class="r" style="left:947.5px;top:197.5px;" width="13" height="13" viewBox="0 0 13 13"><circle cx="6.500" cy="6.500" r="6" fill="#dadada"/><path d="M6.500 6.500 L6.500 0.500 M6.500 6.500 L12 4 M6.500 6.500 L11 11 M6.500 6.500 L4 12.500 M6.500 6.500 L0.500 8 M6.500 6.500 L2 2" stroke="#444" stroke-width="1.300"/><circle cx="6.500" cy="6.500" r="1.800" fill="#444"/></svg>
<div class="r" style="left:965px;top:196.5px;width:37.7px;height:16px;background:#2b2b2b;border-radius:2px;"></div>
<span class="t" style="left:970.00px;top:198.77px;font-size:11.5px;color:#e2e2e2;letter-spacing:-0.345px;">0.00</span>
<svg class="r" style="left:1010px;top:198px;" width="11" height="13" viewBox="0 0 11 13"><path d="M3 0.500 H10 V12 H3 A 6 6 0 0 1 3 0.500Z" fill="#dadada"/><circle cx="5" cy="6.200" r="2.600" fill="#444"/></svg>
<div class="r" style="left:1026px;top:196.5px;width:37.3px;height:16px;background:#2b2b2b;border-radius:2px;"></div>
<span class="t" style="left:1031.00px;top:198.77px;font-size:11.5px;color:#e2e2e2;letter-spacing:-0.270px;">1.00</span>
<div class="r" style="left:1066.7px;top:195px;width:18.3px;height:18px;background:#5285a6;"></div>
<svg class="r" style="left:1068.3px;top:196.5px;" width="15" height="15" viewBox="0 0 15 15"><circle cx="7.500" cy="7.500" r="6.800" fill="#4fb9c6" stroke="#2a3a44" stroke-width="0.900"/></svg>
<span class="t" style="left:1070.80px;top:200.92px;font-size:6px;color:#1e4850;letter-spacing:0.250px;font-weight:bold;">ON</span>
<div class="r" style="left:1087.7px;top:195px;width:138px;height:17.5px;background:#5d5d5d;border-radius:2px;"></div>
<div class="r" style="left:1205px;top:195px;width:1px;height:17.5px;background:#4e4e4e;"></div>
<span class="t" style="left:1091.70px;top:198.99px;font-size:11px;color:#dedede;letter-spacing:-0.307px;">sRGB gamma</span>
<svg class="r" style="left:1211px;top:201px;" width="11" height="6" viewBox="0 0 11 6"><path d="M0.500 0 H10 L5.200 5Z" fill="#d8d8d8"/></svg>
<svg class="r" style="left:316px;top:214px;overflow:hidden" width="1119.5" height="716.5" viewBox="316 214 1119.5 716.5" fill="none"><rect x="316" y="214" width="1119.500" height="716.500" fill="#5d5d5d"/><g shape-rendering="crispEdges"><path d="M484.2 355.4 L-300.1 928.3" stroke="#464646" stroke-width="1"/><path d="M519.5 356.5 L-216.9 935.5" stroke="#464646" stroke-width="1"/><path d="M555.0 357.7 L-132.4 942.9" stroke="#464646" stroke-width="1"/><path d="M590.7 358.8 L-46.5 950.3" stroke="#464646" stroke-width="1"/><path d="M626.6 360.0 L40.6 957.9" stroke="#464646" stroke-width="1"/><path d="M662.7 361.1 L129.1 965.6" stroke="#464646" stroke-width="1"/><path d="M699.1 362.3 L219.0 973.4" stroke="#464646" stroke-width="1"/><path d="M735.7 363.5 L310.4 981.3" stroke="#464646" stroke-width="1"/><path d="M772.5 364.6 L403.2 989.3" stroke="#464646" stroke-width="1"/><path d="M809.6 365.8 L497.5 997.5" stroke="#464646" stroke-width="1"/><path d="M846.8 367.0 L593.4 1005.8" stroke="#464646" stroke-width="1"/><path d="M884.3 368.2 L690.9 1014.3" stroke="#464646" stroke-width="1"/><path d="M960.1 370.6 L890.7 1031.6" stroke="#464646" stroke-width="1"/><path d="M998.3 371.9 L993.1 1040.5" stroke="#464646" stroke-width="1"/><path d="M1036.7 373.1 L1097.3 1049.6" stroke="#464646" stroke-width="1"/><path d="M1075.4 374.3 L1203.3 1058.7" stroke="#464646" stroke-width="1"/><path d="M1114.4 375.6 L1311.1 1068.1" stroke="#464646" stroke-width="1"/><path d="M1153.5 376.8 L1420.8 1077.6" stroke="#464646" stroke-width="1"/><path d="M1193.0 378.1 L1532.5 1087.3" stroke="#464646" stroke-width="1"/><path d="M1232.7 379.4 L1646.1 1097.2" stroke="#464646" stroke-width="1"/><path d="M1272.6 380.6 L1761.8 1107.2" stroke="#464646" stroke-width="1"/><path d="M1312.8 381.9 L1879.6 1117.4" stroke="#464646" stroke-width="1"/><path d="M1353.3 383.2 L1999.5 1127.8" stroke="#464646" stroke-width="1"/><path d="M1394.0 384.5 L2121.7 1138.4" stroke="#464646" stroke-width="1"/><path d="M484.2 355.4 L1394.0 384.5" stroke="#464646" stroke-width="1"/><path d="M468.6 366.8 L1406.8 397.8" stroke="#464646" stroke-width="1"/><path d="M452.1 378.9 L1420.4 411.9" stroke="#464646" stroke-width="1"/><path d="M434.4 391.8 L1435.0 427.0" stroke="#464646" stroke-width="1"/><path d="M415.7 405.5 L1450.7 443.2" stroke="#464646" stroke-width="1"/><path d="M395.6 420.1 L1467.5 460.7" stroke="#464646" stroke-width="1"/><path d="M374.1 435.8 L1485.6 479.5" stroke="#464646" stroke-width="1"/><path d="M351.0 452.7 L1505.2 499.8" stroke="#464646" stroke-width="1"/><path d="M326.2 470.8 L1526.5 521.8" stroke="#464646" stroke-width="1"/><path d="M299.4 490.4 L1549.6 545.7" stroke="#464646" stroke-width="1"/><path d="M270.4 511.6 L1574.8 571.9" stroke="#464646" stroke-width="1"/><path d="M238.8 534.7 L1602.5 600.6" stroke="#464646" stroke-width="1"/><path d="M166.8 587.2 L1666.8 667.1" stroke="#464646" stroke-width="1"/><path d="M125.5 617.4 L1704.3 706.0" stroke="#464646" stroke-width="1"/><path d="M79.8 650.8 L1746.4 749.6" stroke="#464646" stroke-width="1"/><path d="M29.2 687.8 L1793.8 798.7" stroke="#464646" stroke-width="1"/><path d="M-27.4 729.1 L1847.6 854.5" stroke="#464646" stroke-width="1"/><path d="M-91.0 775.6 L1909.3 918.4" stroke="#464646" stroke-width="1"/><path d="M-162.9 828.1 L1980.7 992.4" stroke="#464646" stroke-width="1"/><path d="M-245.0 888.1 L2064.3 1079.0" stroke="#464646" stroke-width="1"/><path d="M922.1 369.4 L789.9 1022.9" stroke="#3b3b3b" stroke-width="1.8"/><path d="M204.5 559.8 L1633.0 632.1" stroke="#3b3b3b" stroke-width="1.8"/></g><defs><linearGradient id="sd" x1="0" x2="1" y1="0" y2="0"><stop offset="0" stop-color="#9a9a9a"/><stop offset="1" stop-color="#5a5a5a"/></linearGradient></defs><path d="M824.8 425.9 L910.4 439.8 Q921 442.500 921.9 450 L917.8 474.1 Q914 465 903 463 L815.4 448.1Z" fill="#a2a2a2"/><path d="M903 463 L910.4 439.8 Q921 442.500 921.9 450 L917.8 475.9 Q916 465.500 903 463Z" fill="url(#sd)"/><path d="M815.4 448.1 L903 463 Q916 465.500 917.8 475.9 Q917.500 488 908.5 496.3 L862.2 582.4 L851.1 581.5 L888.1 506 Q890 494 877 492.6 L815.4 480Z" fill="#979797"/><path d="M886 499 L889.500 507 L852.500 580.500 L850.500 581 L882 516Z" fill="#6e6e6e"/><path d="M824.8 425.9 L910.4 439.8 Q921 442.500 921.9 450 L917.8 474.1 Q914 465 903 463 L815.4 448.1Z" fill="none" stroke="#5ff0aa" stroke-width="1.300" stroke-linejoin="round"/><path d="M815.4 448.1 L903 463 Q916 465.500 917.8 475.9 Q917.500 488 908.5 496.3 L862.2 582.4 L851.1 581.5 L888.1 506 Q890 494 877 492.6 L815.4 480Z" fill="none" stroke="#5ff0aa" stroke-width="1.300" stroke-linejoin="round"/><path d="M893.500 437 L887 460.500 M906.500 439.200 L902.500 463" stroke="#5ff0aa" stroke-width="0.900" fill="none"/><path d="M886.500 501 L851.500 576 " stroke="#5ff0aa" stroke-width="1" fill="none"/><path d="M872.4 491.7 V427" stroke="#3ee03e" stroke-width="1.300"/><path d="M872 406.5 L877.300 428 Q872 430 866.700 428Z" fill="#16e616"/><rect x="862.2" y="501.3" width="20.400" height="20" fill="none" stroke="#6cc3e6" stroke-width="1.100"/><rect x="872" y="510.800" width="1" height="1" fill="#cfe"/><path d="M892.4 512 L962.2 515.2" stroke="#f3d2a4" stroke-width="1.200"/><defs><linearGradient id="cn" x1="0" x2="0" y1="0" y2="1"><stop offset="0" stop-color="#fff0d0"/><stop offset="1" stop-color="#d8a870"/></linearGradient></defs><path d="M962 510.800 L983.5 516.1 L962 519.600 Q960.500 515 962 510.800Z" fill="url(#cn)"/><path d="M869.6 520.4 L863.300 549" stroke="#1414f0" stroke-width="1.300"/><path d="M857.500 552 Q857 548 862 548.500 Q866.500 549 866 553.500 L860.500 563 Z" fill="#0606f0"/><path d="M933.500 442.500 L950.800 443.500 L950.300 459.300 L933.300 458.300Z" fill="#5050c0" fill-opacity="0.850" stroke="#3a3ad8" stroke-width="1"/><path d="M927.4 541.500 L945.2 542.500 L945 549.600 L927.600 548.800Z" fill="#4caa4c" fill-opacity="0.900" stroke="#48d048" stroke-width="1"/><path d="M341.25 904.75 V892" stroke="#30d030" stroke-width="1.200"/><path d="M341.25 904.75 H355" stroke="#e03030" stroke-width="1.200"/></svg>
<span class="t" style="left:339.00px;top:881.46px;font-size:9.5px;color:#40e040;font-weight:bold;">y</span>
<span class="t" style="left:355.50px;top:894.46px;font-size:9.5px;color:#e83a3a;font-weight:bold;">x</span>
<span class="t" style="left:337.50px;top:902.46px;font-size:9.5px;color:#2020f0;font-weight:bold;">z</span>
<span class="t" style="left:853.50px;top:911.76px;font-size:10.5px;color:#f0f0f0;letter-spacing:-0.916px;font-weight:bold;font-family:'DejaVu Sans',sans-serif;">persp</span>
<svg class="r" style="left:1842px;top:176.5px;" width="14" height="14" viewBox="0 0 14 14"><path d="M7 7 V2.500 M7 7 L2 11.500 M7 7 L12 11.500" stroke="#ccc" stroke-width="1"/><path d="M7 0 L9.500 4 H4.500Z" fill="#6fd26f"/><path d="M0.500 13.500 L1.500 9 L5 12.500Z" fill="#5a8cf0"/><path d="M13.500 13.500 L12.500 9 L9 12.500Z" fill="#e85050"/></svg>
<svg class="r" style="left:1863px;top:176.5px;" width="14.5" height="14" viewBox="0 0 14.5 14"><circle cx="7.200" cy="7" r="6.800" fill="#4fb9c6"/><path d="M7.200 7 m-3.500 0 a3.500 3.500 0 1 1 3.500 3.500 v3.300 a6.800 6.800 0 0 0 6.800 -6.800 h-3.300" fill="#9a9a9a" fill-opacity="0.600"/><circle cx="7.200" cy="7" r="3.300" fill="#444"/><path d="M3 9 L7 5.500 L8.500 9.500Z" fill="#444"/></svg>
<svg class="r" style="left:1884.5px;top:176.5px;" width="14" height="14" viewBox="0 0 14 14"><path d="M0.500 0 V13.500 H12" stroke="#8a8a8a" stroke-width="1" fill="none"/><path d="M2.500 11.500 L11.500 2.500" stroke="#4fb9c6" stroke-width="1.600"/><path d="M7.500 1 H13 V6.500Z" fill="#4fb9c6"/></svg>
<span class="t" style="left:1453.50px;top:200.29px;font-size:11px;color:#dedede;letter-spacing:0.091px;">Channels</span>
<span class="t" style="left:1516.30px;top:200.29px;font-size:11px;color:#dedede;letter-spacing:0.036px;">Edit</span>
<span class="t" style="left:1551.70px;top:200.29px;font-size:11px;color:#dedede;letter-spacing:0.252px;">Object</span>
<span class="t" style="left:1600.20px;top:200.29px;font-size:11px;color:#dedede;letter-spacing:0.321px;">Show</span>
<span class="t" style="left:1447.00px;top:219.52px;font-size:11px;color:#d8d8d8;letter-spacing:-0.752px;font-weight:bold;font-family:'DejaVu Sans',sans-serif;">group1</span>
<span class="t" style="left:1765.10px;top:235.57px;font-size:11.5px;color:#d2d2d2;letter-spacing:-0.452px;">Translate X</span>
<div class="r" style="left:1825px;top:232.5px;width:74px;height:14.2px;background:#2b2b2b;border-radius:1px;"></div>
<span class="t" style="left:1834.00px;top:235.07px;font-size:11.5px;color:#e6e6e6;">0</span>
<span class="t" style="left:1765.10px;top:251.57px;font-size:11.5px;color:#d2d2d2;letter-spacing:-0.433px;">Translate Y</span>
<div class="r" style="left:1825px;top:248.5px;width:74px;height:14.2px;background:#2b2b2b;border-radius:1px;"></div>
<span class="t" style="left:1834.00px;top:251.07px;font-size:11.5px;color:#e6e6e6;">0</span>
<span class="t" style="left:1765.10px;top:267.57px;font-size:11.5px;color:#d2d2d2;letter-spacing:-0.393px;">Translate Z</span>
<div class="r" style="left:1825px;top:264.5px;width:74px;height:14.2px;background:#2b2b2b;border-radius:1px;"></div>
<span class="t" style="left:1834.00px;top:267.07px;font-size:11.5px;color:#e6e6e6;">0</span>
<span class="t" style="left:1776.00px;top:283.57px;font-size:11.5px;color:#d2d2d2;letter-spacing:-0.281px;">Rotate X</span>
<div class="r" style="left:1825px;top:280.5px;width:74px;height:14.2px;background:#2b2b2b;border-radius:1px;"></div>
<span class="t" style="left:1834.00px;top:283.07px;font-size:11.5px;color:#e6e6e6;">0</span>
<span class="t" style="left:1776.00px;top:299.57px;font-size:11.5px;color:#d2d2d2;letter-spacing:-0.255px;">Rotate Y</span>
<div class="r" style="left:1825px;top:296.5px;width:74px;height:14.2px;background:#2b2b2b;border-radius:1px;"></div>
<span class="t" style="left:1834.00px;top:299.07px;font-size:11.5px;color:#e6e6e6;">0</span>
<span class="t" style="left:1776.00px;top:315.57px;font-size:11.5px;color:#d2d2d2;letter-spacing:-0.200px;">Rotate Z</span>
<div class="r" style="left:1825px;top:312.5px;width:74px;height:14.2px;background:#2b2b2b;border-radius:1px;"></div>
<span class="t" style="left:1834.00px;top:315.07px;font-size:11.5px;color:#e6e6e6;">0</span>
<span class="t" style="left:1784.00px;top:331.57px;font-size:11.5px;color:#d2d2d2;letter-spacing:-0.733px;">Scale X</span>
<div class="r" style="left:1825px;top:328.5px;width:74px;height:14.2px;background:#2b2b2b;border-radius:1px;"></div>
<span class="t" style="left:1834.00px;top:331.07px;font-size:11.5px;color:#e6e6e6;">1</span>
<span class="t" style="left:1784.00px;top:347.57px;font-size:11.5px;color:#d2d2d2;letter-spacing:-0.703px;">Scale Y</span>
<div class="r" style="left:1825px;top:344.5px;width:74px;height:14.2px;background:#2b2b2b;border-radius:1px;"></div>
<span class="t" style="left:1834.00px;top:347.07px;font-size:11.5px;color:#e6e6e6;">1</span>
<span class="t" style="left:1784.00px;top:363.57px;font-size:11.5px;color:#d2d2d2;letter-spacing:-0.641px;">Scale Z</span>
<div class="r" style="left:1825px;top:360.5px;width:74px;height:14.2px;background:#2b2b2b;border-radius:1px;"></div>
<span class="t" style="left:1834.00px;top:363.07px;font-size:11.5px;color:#e6e6e6;">1</span>
<span class="t" style="left:1781.00px;top:379.57px;font-size:11.5px;color:#d2d2d2;letter-spacing:-0.383px;">Visibility</span>
<div class="r" style="left:1825px;top:376.5px;width:74px;height:14.2px;background:#2b2b2b;border-radius:1px;"></div>
<span class="t" style="left:1834.00px;top:379.07px;font-size:11.5px;color:#e6e6e6;">on</span>
<div class="r" style="left:1445.8px;top:408px;width:454px;height:297.5px;background:#2b2b2b;"></div>
<svg class="r" style="left:1596px;top:709px;" width="152" height="1" viewBox="0 0 152 1"><rect x="0" y="0" width="1" height="1" fill="#7a7a7a"/><rect x="2" y="0" width="1" height="1" fill="#7a7a7a"/><rect x="4" y="0" width="1" height="1" fill="#7a7a7a"/><rect x="6" y="0" width="1" height="1" fill="#7a7a7a"/><rect x="8" y="0" width="1" height="1" fill="#7a7a7a"/><rect x="10" y="0" width="1" height="1" fill="#7a7a7a"/><rect x="12" y="0" width="1" height="1" fill="#7a7a7a"/><rect x="14" y="0" width="1" height="1" fill="#7a7a7a"/><rect x="16" y="0" width="1" height="1" fill="#7a7a7a"/><rect x="18" y="0" width="1" height="1" fill="#7a7a7a"/><rect x="20" y="0" width="1" height="1" fill="#7a7a7a"/><rect x="22" y="0" width="1" height="1" fill="#7a7a7a"/><rect x="24" y="0" width="1" height="1" fill="#7a7a7a"/><rect x="26" y="0" width="1" height="1" fill="#7a7a7a"/><rect x="28" y="0" width="1" height="1" fill="#7a7a7a"/><rect x="30" y="0" width="1" height="1" fill="#7a7a7a"/><rect x="32" y="0" width="1" height="1" fill="#7a7a7a"/><rect x="34" y="0" width="1" height="1" fill="#7a7a7a"/><rect x="36" y="0" width="1" height="1" fill="#7a7a7a"/><rect x="38" y="0" width="1" height="1" fill="#7a7a7a"/><rect x="40" y="0" width="1" height="1" fill="#7a7a7a"/><rect x="42" y="0" width="1" height="1" fill="#7a7a7a"/><rect x="44" y="0" width="1" height="1" fill="#7a7a7a"/><rect x="46" y="0" width="1" height="1" fill="#7a7a7a"/><rect x="48" y="0" width="1" height="1" fill="#7a7a7a"/><rect x="50" y="0" width="1" height="1" fill="#7a7a7a"/><rect x="52" y="0" width="1" height="1" fill="#7a7a7a"/><rect x="54" y="0" width="1" height="1" fill="#7a7a7a"/><rect x="56" y="0" width="1" height="1" fill="#7a7a7a"/><rect x="58" y="0" width="1" height="1" fill="#7a7a7a"/><rect x="60" y="0" width="1" height="1" fill="#7a7a7a"/><rect x="62" y="0" width="1" height="1" fill="#7a7a7a"/><rect x="64" y="0" width="1" height="1" fill="#7a7a7a"/><rect x="66" y="0" width="1" height="1" fill="#7a7a7a"/><rect x="68" y="0" width="1" height="1" fill="#7a7a7a"/><rect x="70" y="0" width="1" height="1" fill="#7a7a7a"/><rect x="72" y="0" width="1" height="1" fill="#7a7a7a"/><rect x="74" y="0" width="1" height="1" fill="#7a7a7a"/><rect x="76" y="0" width="1" height="1" fill="#7a7a7a"/><rect x="78" y="0" width="1" height="1" fill="#7a7a7a"/><rect x="80" y="0" width="1" height="1" fill="#7a7a7a"/><rect x="82" y="0" width="1" height="1" fill="#7a7a7a"/><rect x="84" y="0" width="1" height="1" fill="#7a7a7a"/><rect x="86" y="0" width="1" height="1" fill="#7a7a7a"/><rect x="88" y="0" width="1" height="1" fill="#7a7a7a"/><rect x="90" y="0" width="1" height="1" fill="#7a7a7a"/><rect x="92" y="0" width="1" height="1" fill="#7a7a7a"/><rect x="94" y="0" width="1" height="1" fill="#7a7a7a"/><rect x="96" y="0" width="1" height="1" fill="#7a7a7a"/><rect x="98" y="0" width="1" height="1" fill="#7a7a7a"/><rect x="100" y="0" width="1" height="1" fill="#7a7a7a"/><rect x="102" y="0" width="1" height="1" fill="#7a7a7a"/><rect x="104" y="0" width="1" height="1" fill="#7a7a7a"/><rect x="106" y="0" width="1" height="1" fill="#7a7a7a"/><rect x="108" y="0" width="1" height="1" fill="#7a7a7a"/><rect x="110" y="0" width="1" height="1" fill="#7a7a7a"/><rect x="112" y="0" width="1" height="1" fill="#7a7a7a"/><rect x="114" y="0" width="1" height="1" fill="#7a7a7a"/><rect x="116" y="0" width="1" height="1" fill="#7a7a7a"/><rect x="118" y="0" width="1" height="1" fill="#7a7a7a"/><rect x="120" y="0" width="1" height="1" fill="#7a7a7a"/><rect x="122" y="0" width="1" height="1" fill="#7a7a7a"/><rect x="124" y="0" width="1" height="1" fill="#7a7a7a"/><rect x="126" y="0" width="1" height="1" fill="#7a7a7a"/><rect x="128" y="0" width="1" height="1" fill="#7a7a7a"/><rect x="130" y="0" width="1" height="1" fill="#7a7a7a"/><rect x="132" y="0" width="1" height="1" fill="#7a7a7a"/><rect x="134" y="0" width="1" height="1" fill="#7a7a7a"/><rect x="136" y="0" width="1" height="1" fill="#7a7a7a"/><rect x="138" y="0" width="1" height="1" fill="#7a7a7a"/><rect x="140" y="0" width="1" height="1" fill="#7a7a7a"/><rect x="142" y="0" width="1" height="1" fill="#7a7a7a"/><rect x="144" y="0" width="1" height="1" fill="#7a7a7a"/><rect x="146" y="0" width="1" height="1" fill="#7a7a7a"/><rect x="148" y="0" width="1" height="1" fill="#7a7a7a"/><rect x="150" y="0" width="1" height="1" fill="#7a7a7a"/></svg>
<div class="r" style="left:1445.3px;top:718.3px;width:455.7px;height:211px;background:#444;border:1px solid #3a3a3a;"></div>
<div class="r" style="left:1446.3px;top:719.3px;width:453.7px;height:16.7px;background:#373737;"></div>
<div class="r" style="left:1447.4px;top:719.6px;width:57.4px;height:16.5px;background:#444444;border-radius:2px 2px 0 0;border-top:1px solid #505050;border-left:1px solid #4c4c4c;"></div>
<span class="t" style="left:1457.30px;top:724.19px;font-size:11px;color:#f0f0f0;letter-spacing:0.133px;">Display</span>
<div class="r" style="left:1507.8px;top:720.3px;width:46.5px;height:15.8px;background:#383838;border-radius:3px 3px 0 0;border:1px solid #454545;border-bottom:none;"></div>
<span class="t" style="left:1518.00px;top:724.19px;font-size:11px;color:#a8a8a8;letter-spacing:0.135px;">Anim</span>
<span class="t" style="left:1456.30px;top:741.69px;font-size:11px;color:#dedede;letter-spacing:-0.436px;">Layers</span>
<span class="t" style="left:1502.50px;top:741.69px;font-size:11px;color:#dedede;letter-spacing:0.456px;">Options</span>
<span class="t" style="left:1559.40px;top:741.69px;font-size:11px;color:#dedede;letter-spacing:0.144px;">Help</span>
<svg class="r" style="left:1803.4px;top:762px;" width="15" height="12" viewBox="0 0 15 12"><path d="M0.500 7 L6.500 3 L11 7 L6 11Z" fill="#cfcfcf"/><path d="M11.500 3 V10.500 M8.500 5.500 L11.500 2 L14.500 5.500Z" stroke="#4fb9c6" stroke-width="1.800" fill="#4fb9c6"/></svg>
<svg class="r" style="left:1826px;top:762px;" width="15" height="12" viewBox="0 0 15 12"><path d="M0.500 7 L6.500 3 L11 7 L6 11Z" fill="#cfcfcf"/><path d="M11.500 2 V9 M8.500 7 L11.500 10.500 L14.500 7Z" stroke="#4fb9c6" stroke-width="1.800" fill="#4fb9c6"/></svg>
<svg class="r" style="left:1853.2px;top:762px;" width="16" height="12" viewBox="0 0 16 12"><path d="M0.500 7 L6.500 3 L11 7 L6 11Z" fill="#cfcfcf"/><path d="M11.500 0 V7 M8 3.500 H15" stroke="#4fb9c6" stroke-width="2"/></svg>
<svg class="r" style="left:1877.4px;top:762px;" width="15" height="12" viewBox="0 0 15 12"><path d="M0.500 7 L6.500 3 L11 7 L6 11Z" fill="#cfcfcf"/><circle cx="11" cy="3.500" r="3.500" fill="#4fb9c6"/></svg>
<div class="r" style="left:1449px;top:783px;width:447.3px;height:142.5px;background:#2b2b2b;"></div>
<div class="r" style="left:1903.5px;top:322px;width:16.5px;height:613px;background:#404040;"></div>
<div class="r" style="left:1917.5px;top:172px;width:2.5px;height:150px;background:#3a3a3a;"></div>
<span class="t" style="left:1915.6px;top:185.3px;font-size:10.5px;color:#e4e4e4;letter-spacing:0.347px;transform-origin:0 0;transform:rotate(90deg);">Channel Box / Layer Editor</span>
<div class="r" style="left:1904px;top:332px;width:14.5px;height:109.7px;background:#444;border:1px solid #565656;border-left:none;border-radius:0 3px 3px 0;"></div>
<span class="t" style="left:1915.6px;top:343.5px;font-size:10.5px;color:#9c9c9c;letter-spacing:0.744px;transform-origin:0 0;transform:rotate(90deg);">Modeling Toolkit</span>
<div class="r" style="left:1904px;top:444px;width:14.5px;height:99.8px;background:#444;border:1px solid #565656;border-left:none;border-radius:0 3px 3px 0;"></div>
<span class="t" style="left:1915.6px;top:453.2px;font-size:10.5px;color:#9c9c9c;letter-spacing:0.703px;transform-origin:0 0;transform:rotate(90deg);">Attribute Editor</span>
<div class="r" style="left:0px;top:934.3px;width:1920px;height:1.8px;background:#3a3a3a;"></div>
<svg class="r" style="left:3px;top:941px;" width="5" height="26" viewBox="0 0 5 26"><rect x="0" y="0" width="1.200" height="1.200" fill="#707070"/><rect x="3" y="0" width="1.200" height="1.200" fill="#707070"/><rect x="0" y="3" width="1.200" height="1.200" fill="#707070"/><rect x="3" y="3" width="1.200" height="1.200" fill="#707070"/><rect x="0" y="6" width="1.200" height="1.200" fill="#707070"/><rect x="3" y="6" width="1.200" height="1.200" fill="#707070"/><rect x="0" y="9" width="1.200" height="1.200" fill="#707070"/><rect x="3" y="9" width="1.200" height="1.200" fill="#707070"/><rect x="0" y="12" width="1.200" height="1.200" fill="#707070"/><rect x="3" y="12" width="1.200" height="1.200" fill="#707070"/><rect x="0" y="15" width="1.200" height="1.200" fill="#707070"/><rect x="3" y="15" width="1.200" height="1.200" fill="#707070"/><rect x="0" y="18" width="1.200" height="1.200" fill="#707070"/><rect x="3" y="18" width="1.200" height="1.200" fill="#707070"/><rect x="0" y="21" width="1.200" height="1.200" fill="#707070"/><rect x="3" y="21" width="1.200" height="1.200" fill="#707070"/><rect x="0" y="24" width="1.200" height="1.200" fill="#707070"/><rect x="3" y="24" width="1.200" height="1.200" fill="#707070"/></svg>
<div class="r" style="left:13px;top:940px;width:1612px;height:28px;background:#2b2b2b;"></div>
<div class="r" style="left:22px;top:940px;width:10.7px;height:28px;background:#5d5d5d;"></div>
<span class="t" style="left:24.00px;top:953.69px;font-size:11px;color:#f0f0f0;">1</span>
<div class="r" style="left:73.7px;top:953px;width:2px;height:15px;background:#bdbdbd;"></div>
<span class="t" style="left:76.20px;top:939.69px;font-size:11px;color:#9c9c9c;">5</span>
<div class="r" style="left:140.16px;top:953px;width:2px;height:15px;background:#bdbdbd;"></div>
<span class="t" style="left:142.66px;top:939.69px;font-size:11px;color:#9c9c9c;">10</span>
<div class="r" style="left:206.62px;top:953px;width:2px;height:15px;background:#bdbdbd;"></div>
<span class="t" style="left:209.12px;top:939.69px;font-size:11px;color:#9c9c9c;">15</span>
<div class="r" style="left:273.08px;top:953px;width:2px;height:15px;background:#bdbdbd;"></div>
<span class="t" style="left:275.58px;top:939.69px;font-size:11px;color:#9c9c9c;">20</span>
<div class="r" style="left:339.54px;top:953px;width:2px;height:15px;background:#bdbdbd;"></div>
<span class="t" style="left:342.04px;top:939.69px;font-size:11px;color:#9c9c9c;">25</span>
<div class="r" style="left:406px;top:953px;width:2px;height:15px;background:#bdbdbd;"></div>
<span class="t" style="left:408.50px;top:939.69px;font-size:11px;color:#9c9c9c;">30</span>
<div class="r" style="left:472.46px;top:953px;width:2px;height:15px;background:#bdbdbd;"></div>
<span class="t" style="left:474.96px;top:939.69px;font-size:11px;color:#9c9c9c;">35</span>
<div class="r" style="left:538.92px;top:953px;width:2px;height:15px;background:#bdbdbd;"></div>
<span class="t" style="left:541.42px;top:939.69px;font-size:11px;color:#9c9c9c;">40</span>
<div class="r" style="left:605.38px;top:953px;width:2px;height:15px;background:#bdbdbd;"></div>
<span class="t" style="left:607.88px;top:939.69px;font-size:11px;color:#9c9c9c;">45</span>
<div class="r" style="left:671.84px;top:953px;width:2px;height:15px;background:#bdbdbd;"></div>
<span class="t" style="left:674.34px;top:939.69px;font-size:11px;color:#9c9c9c;">50</span>
<div class="r" style="left:738.3px;top:953px;width:2px;height:15px;background:#bdbdbd;"></div>
<span class="t" style="left:740.80px;top:939.69px;font-size:11px;color:#9c9c9c;">55</span>
<div class="r" style="left:804.76px;top:953px;width:2px;height:15px;background:#bdbdbd;"></div>
<span class="t" style="left:807.26px;top:939.69px;font-size:11px;color:#9c9c9c;">60</span>
<div class="r" style="left:871.22px;top:953px;width:2px;height:15px;background:#bdbdbd;"></div>
<span class="t" style="left:873.72px;top:939.69px;font-size:11px;color:#9c9c9c;">65</span>
<div class="r" style="left:937.68px;top:953px;width:2px;height:15px;background:#bdbdbd;"></div>
<span class="t" style="left:940.18px;top:939.69px;font-size:11px;color:#9c9c9c;">70</span>
<div class="r" style="left:1004.14px;top:953px;width:2px;height:15px;background:#bdbdbd;"></div>
<span class="t" style="left:1006.64px;top:939.69px;font-size:11px;color:#9c9c9c;">75</span>
<div class="r" style="left:1070.6px;top:953px;width:2px;height:15px;background:#bdbdbd;"></div>
<span class="t" style="left:1073.10px;top:939.69px;font-size:11px;color:#9c9c9c;">80</span>
<div class="r" style="left:1137.06px;top:953px;width:2px;height:15px;background:#bdbdbd;"></div>
<span class="t" style="left:1139.56px;top:939.69px;font-size:11px;color:#9c9c9c;">85</span>
<div class="r" style="left:1203.52px;top:953px;width:2px;height:15px;background:#bdbdbd;"></div>
<span class="t" style="left:1206.02px;top:939.69px;font-size:11px;color:#9c9c9c;">90</span>
<div class="r" style="left:1269.98px;top:953px;width:2px;height:15px;background:#bdbdbd;"></div>
<span class="t" style="left:1272.48px;top:939.69px;font-size:11px;color:#9c9c9c;">95</span>
<div class="r" style="left:1336.44px;top:953px;width:2px;height:15px;background:#bdbdbd;"></div>
<span class="t" style="left:1338.94px;top:939.69px;font-size:11px;color:#9c9c9c;">100</span>
<div class="r" style="left:1402.9px;top:953px;width:2px;height:15px;background:#bdbdbd;"></div>
<span class="t" style="left:1405.40px;top:939.69px;font-size:11px;color:#9c9c9c;">105</span>
<div class="r" style="left:1469.36px;top:953px;width:2px;height:15px;background:#bdbdbd;"></div>
<span class="t" style="left:1471.86px;top:939.69px;font-size:11px;color:#9c9c9c;">110</span>
<div class="r" style="left:1535.82px;top:953px;width:2px;height:15px;background:#bdbdbd;"></div>
<span class="t" style="left:1538.32px;top:939.69px;font-size:11px;color:#9c9c9c;">115</span>
<div class="r" style="left:1602.28px;top:953px;width:2px;height:15px;background:#bdbdbd;"></div>
<span class="t" style="left:1604.78px;top:939.69px;font-size:11px;color:#9c9c9c;">120</span>
<div class="r" style="left:1632.3px;top:946px;width:87.7px;height:17.5px;background:#2b2b2b;border-radius:3px;"></div>
<span class="t" style="left:1637.00px;top:949.77px;font-size:11.5px;color:#e6e6e6;">1</span>
<svg class="r" style="left:1728.7px;top:947px;" width="18" height="15" viewBox="0 0 18 15"><rect x="1.5" y="1" width="1.8" height="13" fill="#d8d8d8"/><path d="M11.5 0.500 V14.500 L3.5 7.500Z" fill="#d8d8d8"/><path d="M18 0.500 V14.500 L10 7.500Z" fill="#d8d8d8"/></svg>
<svg class="r" style="left:1752px;top:947px;" width="18" height="15" viewBox="0 0 18 15"><rect x="3" y="1" width="1.8" height="13" fill="#d8d8d8"/><path d="M13.5 0.500 V14.500 L5.5 7.500Z" fill="#d8d8d8"/></svg>
<svg class="r" style="left:1774.3px;top:947px;" width="18" height="15" viewBox="0 0 18 15"><rect x="2.5" y="1" width="2.2" height="13" fill="#e8823c"/><path d="M14 0.500 V14.500 L6 7.500Z" fill="#d8d8d8"/></svg>
<svg class="r" style="left:1797.7px;top:947px;" width="18" height="15" viewBox="0 0 18 15"><path d="M13.500 0.500 V14.500 L2.500 7.500Z" fill="#d8d8d8"/></svg>
<svg class="r" style="left:1821px;top:947px;" width="18" height="15" viewBox="0 0 18 15"><path d="M4 0.500 V14.500 L15.500 7.500Z" fill="#d8d8d8"/></svg>
<svg class="r" style="left:1844.3px;top:947px;" width="18" height="15" viewBox="0 0 18 15"><path d="M4 0.500 V14.500 L12 7.500Z" fill="#d8d8d8"/><rect x="13.5" y="1" width="2.2" height="13" fill="#e8823c"/></svg>
<svg class="r" style="left:1866.7px;top:947px;" width="18" height="15" viewBox="0 0 18 15"><path d="M4.5 0.500 V14.500 L12.5 7.500Z" fill="#d8d8d8"/><rect x="13.5" y="1" width="1.8" height="13" fill="#d8d8d8"/></svg>
<svg class="r" style="left:1890px;top:947px;" width="18" height="15" viewBox="0 0 18 15"><path d="M0 0.500 V14.500 L8 7.500Z" fill="#d8d8d8"/><path d="M6.5 0.500 V14.500 L14.5 7.500Z" fill="#d8d8d8"/><rect x="15" y="1" width="1.8" height="13" fill="#d8d8d8"/></svg>
<div class="r" style="left:0px;top:970.5px;width:1920px;height:2.2px;background:#3a3a3a;"></div>
<svg class="r" style="left:3px;top:979px;" width="5" height="24" viewBox="0 0 5 24"><rect x="0" y="0" width="1.200" height="1.200" fill="#707070"/><rect x="3" y="0" width="1.200" height="1.200" fill="#707070"/><rect x="0" y="3" width="1.200" height="1.200" fill="#707070"/><rect x="3" y="3" width="1.200" height="1.200" fill="#707070"/><rect x="0" y="6" width="1.200" height="1.200" fill="#707070"/><rect x="3" y="6" width="1.200" height="1.200" fill="#707070"/><rect x="0" y="9" width="1.200" height="1.200" fill="#707070"/><rect x="3" y="9" width="1.200" height="1.200" fill="#707070"/><rect x="0" y="12" width="1.200" height="1.200" fill="#707070"/><rect x="3" y="12" width="1.200" height="1.200" fill="#707070"/><rect x="0" y="15" width="1.200" height="1.200" fill="#707070"/><rect x="3" y="15" width="1.200" height="1.200" fill="#707070"/><rect x="0" y="18" width="1.200" height="1.200" fill="#707070"/><rect x="3" y="18" width="1.200" height="1.200" fill="#707070"/><rect x="0" y="21" width="1.200" height="1.200" fill="#707070"/><rect x="3" y="21" width="1.200" height="1.200" fill="#707070"/></svg>
<div class="r" style="left:14px;top:978.3px;width:87.7px;height:24px;background:#2b2b2b;border-radius:3px;"></div>
<div class="r" style="left:110px;top:978.3px;width:87.7px;height:24px;background:#2b2b2b;border-radius:3px;"></div>
<span class="t" style="left:19.50px;top:985.77px;font-size:11.5px;color:#e6e6e6;">1</span>
<span class="t" style="left:115.50px;top:985.77px;font-size:11.5px;color:#e6e6e6;">1</span>
<div class="r" style="left:204.3px;top:978px;width:1021.4px;height:24.3px;background:#373737;border-radius:2px;"></div>
<div class="r" style="left:211px;top:980.7px;width:613.3px;height:19.3px;background:#5d5d5d;border-radius:3px;"></div>
<div class="r" style="left:215px;top:982.5px;width:15px;height:14.5px;background:#9d9d9d;border-radius:3px;"></div>
<div class="r" style="left:807.7px;top:982.5px;width:14.6px;height:14.5px;background:#9d9d9d;border-radius:3px;"></div>
<span class="t" style="left:233.30px;top:985.77px;font-size:11.5px;color:#e6e6e6;">1</span>
<span class="t" style="left:784.30px;top:985.77px;font-size:11.5px;color:#e6e6e6;letter-spacing:-0.495px;">120</span>
<div class="r" style="left:1233.3px;top:978.3px;width:87px;height:24px;background:#2b2b2b;border-radius:3px;"></div>
<div class="r" style="left:1329px;top:978.3px;width:87.7px;height:24px;background:#2b2b2b;border-radius:3px;"></div>
<span class="t" style="left:1238.30px;top:985.77px;font-size:11.5px;color:#e6e6e6;letter-spacing:-0.495px;">120</span>
<span class="t" style="left:1334.00px;top:985.77px;font-size:11.5px;color:#e6e6e6;letter-spacing:-0.495px;">200</span>
<svg class="r" style="left:1421.2px;top:980px;" width="3" height="20" viewBox="0 0 3 20"><rect x="1" y="0" width="1" height="20" fill="#7a7a7a"/><rect x="0.5" y="5" width="2" height="10" rx="1" fill="#8a8a8a"/></svg>
<svg class="r" style="left:1438px;top:986px;" width="10" height="6" viewBox="0 0 10 6"><path d="M0.500 0.500 H9 L4.700 5Z" fill="#555" stroke="#9a9a9a" stroke-width="0.800"/></svg>
<div class="r" style="left:1454.3px;top:979px;width:101.4px;height:23px;background:#444;border:1px solid #565656;border-radius:3px;"></div>
<span class="t" style="left:1460.00px;top:985.69px;font-size:11px;color:#dcdcdc;letter-spacing:0.045px;">No Character Set</span>
<svg class="r" style="left:1567px;top:986px;" width="10" height="6" viewBox="0 0 10 6"><path d="M0.500 0.500 H9 L4.700 5Z" fill="#555" stroke="#9a9a9a" stroke-width="0.800"/></svg>
<div class="r" style="left:1583.3px;top:979px;width:101px;height:23px;background:#444;border:1px solid #565656;border-radius:3px;"></div>
<span class="t" style="left:1589.30px;top:985.69px;font-size:11px;color:#dcdcdc;letter-spacing:0.020px;">No Anim Layer</span>
<svg class="r" style="left:1693.5px;top:980px;" width="3" height="20" viewBox="0 0 3 20"><rect x="1" y="0" width="1" height="20" fill="#7a7a7a"/><rect x="0.5" y="5" width="2" height="10" rx="1" fill="#8a8a8a"/></svg>
<div class="r" style="left:1709px;top:980px;width:95px;height:19.5px;background:#5d5d5d;border-radius:2px;"></div>
<div class="r" style="left:1783.3px;top:980px;width:1px;height:19.5px;background:#4e4e4e;"></div>
<span class="t" style="left:1712.30px;top:985.69px;font-size:11px;color:#dedede;letter-spacing:0.006px;">24 fps</span>
<svg class="r" style="left:1789.5px;top:987px;" width="11" height="6" viewBox="0 0 11 6"><path d="M0.500 0 H10 L5.200 5Z" fill="#d8d8d8"/></svg>
<svg class="r" style="left:1817.5px;top:983px;" width="17" height="14" viewBox="0 0 17 14"><path d="M3.500 8.500 A3.500 3.500 0 0 1 5.500 3 H13 M13.500 5.500 A3.500 3.500 0 0 1 11.500 11 H4" fill="none" stroke="#d8d8d8" stroke-width="1.800"/><path d="M11.500 0 L15.500 3 L11.500 6Z M5.500 8 L1.500 11 L5.500 14Z" fill="#d8d8d8"/></svg>
<svg class="r" style="left:1846.8px;top:980px;" width="3" height="20" viewBox="0 0 3 20"><rect x="1" y="0" width="1" height="20" fill="#7a7a7a"/><rect x="0.5" y="5" width="2" height="10" rx="1" fill="#8a8a8a"/></svg>
<svg class="r" style="left:1861.5px;top:982px;" width="17" height="17" viewBox="0 0 17 17"><path d="M2.500 4.500 A7 7 0 0 1 15 6.500 M14.500 12.500 A7 7 0 0 1 2 10.500" fill="none" stroke="#d0d0d0" stroke-width="1.300"/><path d="M0.500 2.500 L3.500 6.500 L5.500 2.500Z M16.500 14.500 L13.500 10.500 L11.500 14.500Z" fill="#d0d0d0"/><path d="M8.500 4 V13 M5.500 8.500 H11.500" stroke="#e8823c" stroke-width="1.800"/></svg>
<svg class="r" style="left:1889.5px;top:981px;" width="20" height="19" viewBox="0 0 20 19"><circle cx="4.500" cy="4.500" r="2" fill="none" stroke="#d0d0d0" stroke-width="1.400"/><g stroke="#d0d0d0" stroke-width="1.200"><path d="M4.500 0.800 V2 M4.500 7 V8.200 M0.800 4.500 H2 M7 4.500 H8.200 M1.900 1.900 L2.700 2.700 M6.300 6.300 L7.100 7.100 M1.900 7.100 L2.700 6.300 M6.300 2.700 L7.100 1.900"/></g><circle cx="13.500" cy="4" r="2" fill="#e8823c"/><path d="M8 9.500 L12 7 L15 9.500 L18.500 9 M12 7.500 L11 12.500 L14.500 14.500 L13.500 18.500 M11 12.500 L8.500 15.500 L5.500 15.500" fill="none" stroke="#e8823c" stroke-width="1.800" stroke-linejoin="round"/></svg>
<div class="r" style="left:0px;top:1007.2px;width:1920px;height:2px;background:#3a3a3a;"></div>
<svg class="r" style="left:3px;top:1013px;" width="5" height="22" viewBox="0 0 5 22"><rect x="0" y="0" width="1.200" height="1.200" fill="#707070"/><rect x="3" y="0" width="1.200" height="1.200" fill="#707070"/><rect x="0" y="3" width="1.200" height="1.200" fill="#707070"/><rect x="3" y="3" width="1.200" height="1.200" fill="#707070"/><rect x="0" y="6" width="1.200" height="1.200" fill="#707070"/><rect x="3" y="6" width="1.200" height="1.200" fill="#707070"/><rect x="0" y="9" width="1.200" height="1.200" fill="#707070"/><rect x="3" y="9" width="1.200" height="1.200" fill="#707070"/><rect x="0" y="12" width="1.200" height="1.200" fill="#707070"/><rect x="3" y="12" width="1.200" height="1.200" fill="#707070"/><rect x="0" y="15" width="1.200" height="1.200" fill="#707070"/><rect x="3" y="15" width="1.200" height="1.200" fill="#707070"/><rect x="0" y="18" width="1.200" height="1.200" fill="#707070"/><rect x="3" y="18" width="1.200" height="1.200" fill="#707070"/><rect x="0" y="21" width="1.200" height="1.200" fill="#707070"/><rect x="3" y="21" width="1.200" height="1.200" fill="#707070"/></svg>
<span class="t" style="left:24.00px;top:1019.27px;font-size:11.5px;color:#e0e0e0;letter-spacing:-0.882px;">MEL</span>
<div class="r" style="left:59px;top:1014px;width:663.3px;height:21.7px;background:#2b2b2b;border-radius:3px;"></div>
<svg class="r" style="left:725.5px;top:1019px;" width="3" height="12" viewBox="0 0 3 12"><rect x="1" y="0" width="1" height="1" fill="#8a8a8a"/><rect x="1" y="2" width="1" height="1" fill="#8a8a8a"/><rect x="1" y="4" width="1" height="1" fill="#8a8a8a"/><rect x="1" y="6" width="1" height="1" fill="#8a8a8a"/><rect x="1" y="8" width="1" height="1" fill="#8a8a8a"/><rect x="1" y="10" width="1" height="1" fill="#8a8a8a"/></svg>
<div class="r" style="left:731px;top:1014px;width:1155.7px;height:21.7px;background:#2b2b2b;border-radius:3px;"></div>
<span class="t" style="left:737.30px;top:1020.27px;font-size:11.5px;color:#dcdcdc;letter-spacing:-0.173px;">Undo: move -r 0.881361 0 0</span>
<svg class="r" style="left:1892.3px;top:1016px;" width="19" height="18" viewBox="0 0 19 18"><rect x="0" y="0" width="18.700" height="18" fill="#c8c8c8"/><rect x="0" y="0" width="18.700" height="4" fill="#dcdcdc"/><path d="M2 2 H8" stroke="#444" stroke-width="1" stroke-dasharray="1 1"/><rect x="0" y="4" width="18.700" height="0.800" fill="#555"/></svg>
<span class="t" style="left:1895.00px;top:1022.88px;font-size:9px;color:#333;letter-spacing:0.999px;font-weight:bold;">{;}</span>
<div class="r" style="left:0;top:1040px;width:1920px;height:40px;background:linear-gradient(90deg,#0c1a22 0%,#0e181e 25%,#101416 45%,#0d1012 70%,#0c1014 100%);"></div>
<svg class="r" style="left:16px;top:1051.7px;" width="17" height="17" viewBox="0 0 17 17"><path d="M0 2.300 L7 1.300 V8 H0Z M8 1.200 L16.500 0 V8 H8Z M0 9 H7 V15.700 L0 14.700Z M8 9 H16.500 V17 L8 15.800Z" fill="#ffffff"/></svg>
<svg class="r" style="left:63px;top:1051px;" width="19" height="19" viewBox="0 0 19 19"><circle cx="11.500" cy="7" r="5.300" fill="none" stroke="#ffffff" stroke-width="1.500"/><path d="M7.800 10.800 L1 17.500" stroke="#ffffff" stroke-width="1.600"/></svg>
<svg class="r" style="left:109px;top:1052px;" width="22" height="16" viewBox="0 0 22 16"><rect x="4.500" y="1" width="12.500" height="13.500" fill="none" stroke="#ffffff" stroke-width="1.300"/><path d="M2.500 3 H0.700 V12.500 H2.500 M19 3 H20.800 V12.500 H19" fill="none" stroke="#ffffff" stroke-width="1.300"/></svg>
<svg class="r" style="left:161px;top:1049.5px;" width="21" height="22" viewBox="0 0 21 22"><path d="M0.500 10 C1.500 3.500 6 0.500 11 0.500 C17 0.500 20.500 5 20.500 10.500 V13 H7 C7.500 16.500 10 18 13 18 C15.500 18 17.800 17.300 19.500 16.200 V20.200 C17.500 21.300 15 21.800 12.500 21.800 C6 21.800 2.200 17.800 2.200 12.200 C2.200 8.800 4 6.200 6.500 4.700 C3.500 5.500 1.500 7.500 0.500 10Z M7.200 9 H14.800 C14.800 6.500 13.500 4.800 11 4.800 C8.800 4.800 7.500 6.700 7.200 9Z" fill="#1e88e5" fill-rule="evenodd"/></svg>
<svg class="r" style="left:208px;top:1050px;" width="24" height="21" viewBox="0 0 24 21"><path d="M1 2.500 H8.500 L10.500 4.500 H23 V19 H1Z" fill="#f4c64a"/><path d="M1 6.500 H23 V19 H1Z" fill="#fbe08a"/><path d="M5.500 12 H18.500 V19 H5.500Z" fill="#3aa0e0"/><path d="M9 15 H15 V19 H9Z" fill="#fbe08a"/></svg>
<svg class="r" style="left:258px;top:1048px;" width="22" height="24" viewBox="0 0 22 24"><path d="M7 8 V6 A4 4 0 0 1 15 6 V8" fill="none" stroke="#fff" stroke-width="1.400"/><path d="M0.500 8 L21.500 6 V23.500 L0.500 21Z" fill="#fff"/><path d="M5 12 L10 11.500 V15.500 H5Z M11 11.400 L16.500 11 V15.500 H11Z M5 16.500 H10 V20.500 L5 20Z M11 16.500 H16.500 V21 L11 20.600Z" fill="#0e171c"/></svg>
<svg class="r" style="left:305px;top:1050.5px;" width="27" height="21" viewBox="0 0 27 21"><path d="M0.500 8 L13.500 0.500 L26.500 8 V20.500 H0.500Z" fill="#fff"/><path d="M0.500 8.500 L13.500 15 L26.500 8.500" fill="none" stroke="#0e171c" stroke-width="1.500"/></svg>
<svg class="r" style="left:355px;top:1048.5px;" width="24" height="24" viewBox="0 0 24 24"><circle cx="12" cy="12" r="11.500" fill="#e8453c"/><path d="M12 12 L2.050 17.750 A11.500 11.500 0 0 0 12 23.500 L17.750 13.550Z" fill="#34a853"/><path d="M2.050 17.750 A11.500 11.500 0 0 1 2.050 6.250 L7.800 15 Z" fill="#34a853"/><path d="M12 12 L21.950 6.250 A11.500 11.500 0 0 1 12 23.500 L16.500 14.600Z" fill="#fbbc05"/><path d="M12 12 H23.500 A11.500 11.500 0 0 0 21.950 6.250 L12 6.250Z" fill="#fbbc05"/><path d="M2.050 6.250 A11.500 11.500 0 0 1 21.950 6.250 L12 6.250 L7 14.800Z" fill="#e8453c"/><circle cx="12" cy="12" r="5.300" fill="#fff"/><circle cx="12" cy="12" r="4.200" fill="#4285f4"/></svg>
<svg class="r" style="left:403.5px;top:1048.5px;" width="25" height="25" viewBox="0 0 25 25"><circle cx="12.500" cy="12.500" r="12" fill="#6cb33f"/><path d="M7.500 6.500 V13 C7.500 18.500 17 18.500 17 13 V6.500 M7.500 17 V21.500" fill="none" stroke="#fff" stroke-width="3"/><path d="M17 15 V17.500 H19" fill="none" stroke="#fff" stroke-width="2.500"/></svg>
<svg class="r" style="left:452.5px;top:1048px;" width="25" height="25" viewBox="0 0 25 25"><rect x="0" y="0" width="25" height="25" fill="#18aff0"/><circle cx="12.500" cy="12.500" r="8" fill="#fff"/><circle cx="7.500" cy="7.500" r="4.500" fill="#fff"/><circle cx="17.500" cy="17.500" r="4.500" fill="#fff"/></svg>
<span class="t" style="left:461.00px;top:1053.30px;font-size:15px;color:#18aff0;font-weight:bold;">S</span>
<div class="r" style="left:490px;top:1040px;width:47px;height:40px;background:#36424a;"></div>
<div class="r" style="left:536.5px;top:1040px;width:1px;height:40px;background:#4e5a62;"></div>
<svg class="r" style="left:501.5px;top:1048px;" width="25" height="25" viewBox="0 0 25 25"><rect x="0" y="0" width="25" height="25" fill="#dfe9ea"/><path d="M3 3.500 L8.500 3.500 L12.500 11.500 L16.500 3.500 L22 3.500 V18 H17.500 V10.500 L14 17.500 H11 L7.500 10.500 V18 H3Z" fill="#21a6ad"/><path d="M3 3.500 L8.500 3.500 L7.500 10.500 V18 H3Z" fill="#13848d"/><rect x="12" y="20" width="9" height="2" fill="#3aa"/></svg>
<svg class="r" style="left:552.5px;top:1049.5px;" width="22" height="22" viewBox="0 0 22 22"><rect x="0.750" y="0.750" width="20.500" height="20.500" fill="#1a0a0a" stroke="#e02020" stroke-width="1.500"/><path d="M4.500 16.500 C8 14.500 11 9 10.500 4.500 C10 8.500 13 13 17.500 14 C13 13 8 14 4.500 16.500Z" fill="none" stroke="#fff" stroke-width="1.300"/></svg>
<div class="r" style="left:200px;top:1078px;width:40px;height:2px;background:#84d4e8;"></div>
<div class="r" style="left:346.7px;top:1078px;width:40.6px;height:2px;background:#84d4e8;"></div>
<div class="r" style="left:395.7px;top:1078px;width:40.3px;height:2px;background:#84d4e8;"></div>
<div class="r" style="left:445px;top:1078px;width:40px;height:2px;background:#84d4e8;"></div>
<div class="r" style="left:490px;top:1078px;width:43.5px;height:2px;background:#84d4e8;"></div>
<div class="r" style="left:542.7px;top:1078px;width:40.6px;height:2px;background:#84d4e8;"></div>
<svg class="r" style="left:1699px;top:1055.5px;" width="13" height="8" viewBox="0 0 13 8"><path d="M0.800 7 L6.500 1.200 L12.200 7" fill="none" stroke="#fff" stroke-width="1.300"/></svg>
<svg class="r" style="left:1721px;top:1053.5px;" width="17" height="14" viewBox="0 0 17 14"><rect x="4" y="1" width="11.500" height="8" fill="none" stroke="#fff" stroke-width="1.200"/><path d="M6.500 12.500 H13 M9.700 9 V12.500" stroke="#fff" stroke-width="1.200"/><rect x="0.600" y="0.600" width="3.800" height="5.500" fill="#10191e" stroke="#fff" stroke-width="1"/></svg>
<svg class="r" style="left:1745px;top:1053px;" width="18" height="15" viewBox="0 0 18 15"><path d="M0.500 5.500 H3.500 L7 2 V13 L3.500 9.500 H0.500Z" fill="none" stroke="#fff" stroke-width="1.100"/><path d="M9.500 5 Q11 7.500 9.500 10 M11.800 3 Q14.500 7.500 11.800 12 M14 1.500 Q17.500 7.500 14 13.500" fill="none" stroke="#fff" stroke-width="1.100"/></svg>
<span class="t" style="left:1771.00px;top:1053.14px;font-size:12px;color:#ffffff;letter-spacing:-1.200px;">ENG</span>
<span class="t" style="left:1820.00px;top:1043.84px;font-size:12px;color:#ffffff;letter-spacing:-0.665px;">20:29</span>
<span class="t" style="left:1807.30px;top:1062.14px;font-size:12px;color:#ffffff;letter-spacing:-0.665px;">20.09.2017</span>
<svg class="r" style="left:1879px;top:1052.5px;" width="17" height="16" viewBox="0 0 17 16"><path d="M0.700 0.700 H15.500 V11 H10 L7.500 14 V11 H0.700Z" fill="none" stroke="#fff" stroke-width="1.200"/></svg>
<div class="r" style="left:1914.5px;top:1040px;width:1px;height:40px;background:#5a6368;"></div>
</div></body></html>
